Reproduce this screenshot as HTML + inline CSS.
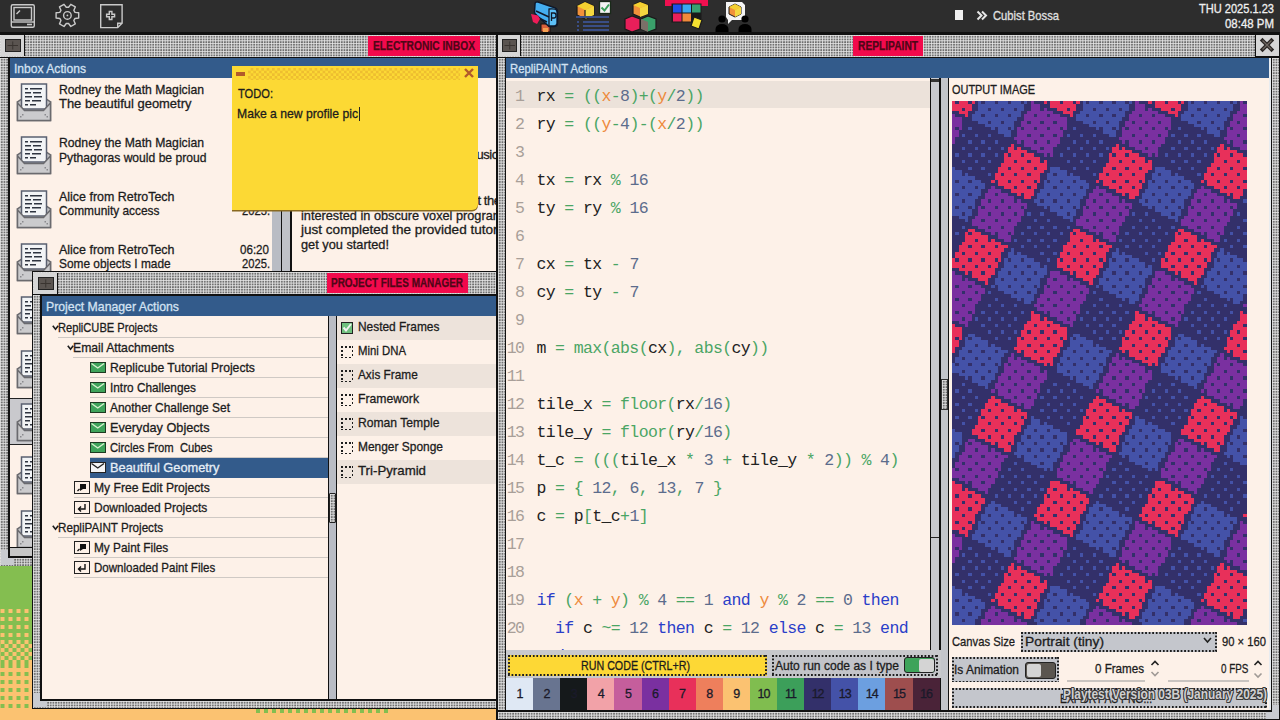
<!DOCTYPE html><html><head><meta charset="utf-8"><style>
*{margin:0;padding:0;box-sizing:border-box}
html,body{width:1280px;height:720px;overflow:hidden}
body{position:relative;background:#fbc271;font-family:"Liberation Sans",sans-serif;font-size:13px;color:#1c1c1c}
.a{position:absolute}
.t{white-space:nowrap;line-height:1;letter-spacing:-0.45px;-webkit-text-stroke:0.3px currentColor;transform-origin:0 0}
.chk{background-color:#b6b6b6;background-image:linear-gradient(90deg,rgba(255,255,255,.42) 1px,transparent 1px),linear-gradient(rgba(255,255,255,.42) 1px,transparent 1px),radial-gradient(circle at 70% 70%,#6e6e6e 0.7px,transparent 1px);background-size:2.6667px 2.6667px}
.blk{background:#111}
.blue{background:#335b8b}
.hdr{color:#d3e2f2}
.lbl{background:#f20a4c}
.lblt{color:#4e0616}
.mono{font-family:"Liberation Mono",monospace;font-size:16.5px;letter-spacing:-0.62px;line-height:1;white-space:nowrap}
.sep{background:#cfc9c4}
.dotb{background-image:linear-gradient(90deg,#1e1e1e 50%,transparent 0),linear-gradient(90deg,#1e1e1e 50%,transparent 0),linear-gradient(#1e1e1e 50%,transparent 0),linear-gradient(#1e1e1e 50%,transparent 0);background-size:3.555px 1.6px,3.555px 1.6px,1.6px 3.555px,1.6px 3.555px;background-position:0 0,0 100%,0 0,100% 0;background-repeat:repeat-x,repeat-x,repeat-y,repeat-y}
</style></head><body>
<div class="a " style="left:0px;top:560px;width:40px;height:50px;background:#84be50"></div>
<div class="a " style="left:0px;top:607px;width:40px;height:33px;background-color:#84be50;background-image:conic-gradient(#fbc271 25%,transparent 0);background-size:8px 8px;background-position:-3.5px 2px"></div>
<div class="a " style="left:0px;top:640px;width:40px;height:24px;background-color:#84be50;background-image:conic-gradient(#fbc271 25%,transparent 0 50%,#fbc271 0 75%,transparent 0);background-size:8px 8px;background-position:-3.5px 0"></div>
<div class="a " style="left:0px;top:664px;width:40px;height:44px;background-color:#fbc271;background-image:conic-gradient(#84be50 25%,transparent 0);background-size:8px 8px;background-position:-3.5px 0"></div>
<div class="a " style="left:252px;top:708.5px;width:136px;height:4px;background-image:conic-gradient(#84be50 25%,transparent 0);background-size:8px 8px;background-position:0 0"></div>
<div class="a blk" style="left:0px;top:32px;width:497px;height:534px;"></div>
<div class="a chk" style="left:0px;top:34.5px;width:496px;height:22px;"></div>
<div class="a " style="left:1px;top:35px;width:23.5px;height:21px;background:#d6d6d6;border-right:1.2px solid #111"></div>
<div class="a " style="left:5px;top:39px;width:15.5px;height:13px;background:#5a5450;border:1.5px solid #222"></div>
<svg class="a" style="left:5px;top:39px;" width="15.5" height="13"><path d="M7.75 2.5v8 M2.5 6.5h10.5" stroke="#3a3430" stroke-width="1"/></svg>
<div class="a lbl" style="left:368px;top:36px;width:112px;height:20px;"></div>
<div class="a t lblt" style="left:373.0px;top:39.0px;font-size:13.5px;letter-spacing:0px;font-weight:bold;transform:scaleX(0.7598);-webkit-text-stroke:0.25px currentColor">ELECTRONIC INBOX</div>
<div class="a chk" style="left:0px;top:58.4px;width:8px;height:508px;"></div>
<div class="a blue" style="left:9.5px;top:58.4px;width:487px;height:20px;"></div>
<div class="a t hdr" style="left:14px;top:62.0px;font-size:13px;letter-spacing:0px;transform:scaleX(0.9309);">Inbox Actions</div>
<div class="a" style="left:9.5px;top:78.4px;width:262px;height:468.3px;overflow:hidden;background:#fdf1e8">
<svg class="a" style="left:6.5px;top:3.5999999999999943px;" width="38" height="40"><path d="M1.5 38.5 V20 L8 15.5 H28 L34.5 20 V38.5z" fill="#c2c2c4" stroke="#6a6a6e" stroke-width="1.5"/>
<rect x="5.5" y="2" width="25" height="25" fill="#f2f4f6" stroke="#5a6070" stroke-width="1.5"/>
<g fill="#2e3440"><rect x="9" y="6" width="3" height="1.5"/><rect x="14" y="6" width="12" height="1.5"/><rect x="9" y="10" width="6" height="1.5"/><rect x="17" y="10" width="8" height="1.5"/><rect x="9" y="14" width="7" height="1.5"/><rect x="18" y="14" width="8" height="1.5"/><rect x="9" y="18" width="5" height="1.5"/><rect x="16" y="18" width="9" height="1.5"/><rect x="9" y="22" width="3" height="1.5"/><rect x="14" y="22" width="6" height="1.5"/></g>
<path d="M1.5 21 L8.5 28.5 H27.5 L34.5 21 V38.5 H1.5z" fill="#cbcbcd" stroke="#6a6a6e" stroke-width="1.5"/>
<g fill="#8a8a8e"><rect x="4" y="34" width="1.5" height="1.5"/><rect x="6" y="32" width="1.5" height="1.5"/><rect x="30.5" y="34" width="1.5" height="1.5"/><rect x="28.5" y="32" width="1.5" height="1.5"/></g></svg>
<div class="a t " style="left:49.5px;top:4.599999999999994px;font-size:13px;letter-spacing:0px;transform:scaleX(0.9374);">Rodney the Math Magician</div>
<div class="a t " style="left:49.5px;top:18.849999999999994px;font-size:13px;letter-spacing:0px;transform:scaleX(0.9962);">The beautiful geometry</div>
<svg class="a" style="left:6.5px;top:56.92999999999998px;" width="38" height="40"><path d="M1.5 38.5 V20 L8 15.5 H28 L34.5 20 V38.5z" fill="#c2c2c4" stroke="#6a6a6e" stroke-width="1.5"/>
<rect x="5.5" y="2" width="25" height="25" fill="#f2f4f6" stroke="#5a6070" stroke-width="1.5"/>
<g fill="#2e3440"><rect x="9" y="6" width="3" height="1.5"/><rect x="14" y="6" width="12" height="1.5"/><rect x="9" y="10" width="6" height="1.5"/><rect x="17" y="10" width="8" height="1.5"/><rect x="9" y="14" width="7" height="1.5"/><rect x="18" y="14" width="8" height="1.5"/><rect x="9" y="18" width="5" height="1.5"/><rect x="16" y="18" width="9" height="1.5"/><rect x="9" y="22" width="3" height="1.5"/><rect x="14" y="22" width="6" height="1.5"/></g>
<path d="M1.5 21 L8.5 28.5 H27.5 L34.5 21 V38.5 H1.5z" fill="#cbcbcd" stroke="#6a6a6e" stroke-width="1.5"/>
<g fill="#8a8a8e"><rect x="4" y="34" width="1.5" height="1.5"/><rect x="6" y="32" width="1.5" height="1.5"/><rect x="30.5" y="34" width="1.5" height="1.5"/><rect x="28.5" y="32" width="1.5" height="1.5"/></g></svg>
<div class="a t " style="left:49.5px;top:57.92999999999998px;font-size:13px;letter-spacing:0px;transform:scaleX(0.9374);">Rodney the Math Magician</div>
<div class="a t " style="left:49.5px;top:72.17999999999998px;font-size:13px;letter-spacing:0px;transform:scaleX(0.9316);">Pythagoras would be proud</div>
<svg class="a" style="left:6.5px;top:110.25999999999999px;" width="38" height="40"><path d="M1.5 38.5 V20 L8 15.5 H28 L34.5 20 V38.5z" fill="#c2c2c4" stroke="#6a6a6e" stroke-width="1.5"/>
<rect x="5.5" y="2" width="25" height="25" fill="#f2f4f6" stroke="#5a6070" stroke-width="1.5"/>
<g fill="#2e3440"><rect x="9" y="6" width="3" height="1.5"/><rect x="14" y="6" width="12" height="1.5"/><rect x="9" y="10" width="6" height="1.5"/><rect x="17" y="10" width="8" height="1.5"/><rect x="9" y="14" width="7" height="1.5"/><rect x="18" y="14" width="8" height="1.5"/><rect x="9" y="18" width="5" height="1.5"/><rect x="16" y="18" width="9" height="1.5"/><rect x="9" y="22" width="3" height="1.5"/><rect x="14" y="22" width="6" height="1.5"/></g>
<path d="M1.5 21 L8.5 28.5 H27.5 L34.5 21 V38.5 H1.5z" fill="#cbcbcd" stroke="#6a6a6e" stroke-width="1.5"/>
<g fill="#8a8a8e"><rect x="4" y="34" width="1.5" height="1.5"/><rect x="6" y="32" width="1.5" height="1.5"/><rect x="30.5" y="34" width="1.5" height="1.5"/><rect x="28.5" y="32" width="1.5" height="1.5"/></g></svg>
<div class="a t " style="left:49.5px;top:111.25999999999999px;font-size:13px;letter-spacing:0px;transform:scaleX(0.9571);">Alice from RetroTech</div>
<div class="a t " style="left:49.5px;top:125.50999999999999px;font-size:13px;letter-spacing:0px;transform:scaleX(0.9151);">Community access</div>
<div class="a t " style="left:232.5px;top:125.50999999999999px;font-size:13px;letter-spacing:0px;transform:scaleX(0.8603);">2025.</div>
<svg class="a" style="left:6.5px;top:163.59px;" width="38" height="40"><path d="M1.5 38.5 V20 L8 15.5 H28 L34.5 20 V38.5z" fill="#c2c2c4" stroke="#6a6a6e" stroke-width="1.5"/>
<rect x="5.5" y="2" width="25" height="25" fill="#f2f4f6" stroke="#5a6070" stroke-width="1.5"/>
<g fill="#2e3440"><rect x="9" y="6" width="3" height="1.5"/><rect x="14" y="6" width="12" height="1.5"/><rect x="9" y="10" width="6" height="1.5"/><rect x="17" y="10" width="8" height="1.5"/><rect x="9" y="14" width="7" height="1.5"/><rect x="18" y="14" width="8" height="1.5"/><rect x="9" y="18" width="5" height="1.5"/><rect x="16" y="18" width="9" height="1.5"/><rect x="9" y="22" width="3" height="1.5"/><rect x="14" y="22" width="6" height="1.5"/></g>
<path d="M1.5 21 L8.5 28.5 H27.5 L34.5 21 V38.5 H1.5z" fill="#cbcbcd" stroke="#6a6a6e" stroke-width="1.5"/>
<g fill="#8a8a8e"><rect x="4" y="34" width="1.5" height="1.5"/><rect x="6" y="32" width="1.5" height="1.5"/><rect x="30.5" y="34" width="1.5" height="1.5"/><rect x="28.5" y="32" width="1.5" height="1.5"/></g></svg>
<div class="a t " style="left:49.5px;top:164.59px;font-size:13px;letter-spacing:0px;transform:scaleX(0.9571);">Alice from RetroTech</div>
<div class="a t " style="left:49.5px;top:178.84px;font-size:13px;letter-spacing:0px;transform:scaleX(0.9145);">Some objects I made</div>
<div class="a t " style="left:230px;top:164.59px;font-size:13px;letter-spacing:0px;transform:scaleX(0.8910);">06:20</div>
<div class="a t " style="left:232.5px;top:178.84px;font-size:13px;letter-spacing:0px;transform:scaleX(0.8603);">2025.</div>
<svg class="a" style="left:6.5px;top:216.92px;" width="38" height="40"><path d="M1.5 38.5 V20 L8 15.5 H28 L34.5 20 V38.5z" fill="#c2c2c4" stroke="#6a6a6e" stroke-width="1.5"/>
<rect x="5.5" y="2" width="25" height="25" fill="#f2f4f6" stroke="#5a6070" stroke-width="1.5"/>
<g fill="#2e3440"><rect x="9" y="6" width="3" height="1.5"/><rect x="14" y="6" width="12" height="1.5"/><rect x="9" y="10" width="6" height="1.5"/><rect x="17" y="10" width="8" height="1.5"/><rect x="9" y="14" width="7" height="1.5"/><rect x="18" y="14" width="8" height="1.5"/><rect x="9" y="18" width="5" height="1.5"/><rect x="16" y="18" width="9" height="1.5"/><rect x="9" y="22" width="3" height="1.5"/><rect x="14" y="22" width="6" height="1.5"/></g>
<path d="M1.5 21 L8.5 28.5 H27.5 L34.5 21 V38.5 H1.5z" fill="#cbcbcd" stroke="#6a6a6e" stroke-width="1.5"/>
<g fill="#8a8a8e"><rect x="4" y="34" width="1.5" height="1.5"/><rect x="6" y="32" width="1.5" height="1.5"/><rect x="30.5" y="34" width="1.5" height="1.5"/><rect x="28.5" y="32" width="1.5" height="1.5"/></g></svg>
<svg class="a" style="left:6.5px;top:270.25px;" width="38" height="40"><path d="M1.5 38.5 V20 L8 15.5 H28 L34.5 20 V38.5z" fill="#c2c2c4" stroke="#6a6a6e" stroke-width="1.5"/>
<rect x="5.5" y="2" width="25" height="25" fill="#f2f4f6" stroke="#5a6070" stroke-width="1.5"/>
<g fill="#2e3440"><rect x="9" y="6" width="3" height="1.5"/><rect x="14" y="6" width="12" height="1.5"/><rect x="9" y="10" width="6" height="1.5"/><rect x="17" y="10" width="8" height="1.5"/><rect x="9" y="14" width="7" height="1.5"/><rect x="18" y="14" width="8" height="1.5"/><rect x="9" y="18" width="5" height="1.5"/><rect x="16" y="18" width="9" height="1.5"/><rect x="9" y="22" width="3" height="1.5"/><rect x="14" y="22" width="6" height="1.5"/></g>
<path d="M1.5 21 L8.5 28.5 H27.5 L34.5 21 V38.5 H1.5z" fill="#cbcbcd" stroke="#6a6a6e" stroke-width="1.5"/>
<g fill="#8a8a8e"><rect x="4" y="34" width="1.5" height="1.5"/><rect x="6" y="32" width="1.5" height="1.5"/><rect x="30.5" y="34" width="1.5" height="1.5"/><rect x="28.5" y="32" width="1.5" height="1.5"/></g></svg>
<div class="a " style="left:0px;top:319.58000000000004px;width:262px;height:47px;background:#c9c9cd;border-top:1.5px solid #222;border-bottom:1.5px solid #222"></div>
<svg class="a" style="left:6.5px;top:323.58000000000004px;" width="38" height="40"><path d="M1.5 38.5 V20 L8 15.5 H28 L34.5 20 V38.5z" fill="#c2c2c4" stroke="#6a6a6e" stroke-width="1.5"/>
<rect x="5.5" y="2" width="25" height="25" fill="#f2f4f6" stroke="#5a6070" stroke-width="1.5"/>
<g fill="#2e3440"><rect x="9" y="6" width="3" height="1.5"/><rect x="14" y="6" width="12" height="1.5"/><rect x="9" y="10" width="6" height="1.5"/><rect x="17" y="10" width="8" height="1.5"/><rect x="9" y="14" width="7" height="1.5"/><rect x="18" y="14" width="8" height="1.5"/><rect x="9" y="18" width="5" height="1.5"/><rect x="16" y="18" width="9" height="1.5"/><rect x="9" y="22" width="3" height="1.5"/><rect x="14" y="22" width="6" height="1.5"/></g>
<path d="M1.5 21 L8.5 28.5 H27.5 L34.5 21 V38.5 H1.5z" fill="#cbcbcd" stroke="#6a6a6e" stroke-width="1.5"/>
<g fill="#8a8a8e"><rect x="4" y="34" width="1.5" height="1.5"/><rect x="6" y="32" width="1.5" height="1.5"/><rect x="30.5" y="34" width="1.5" height="1.5"/><rect x="28.5" y="32" width="1.5" height="1.5"/></g></svg>
<svg class="a" style="left:6.5px;top:376.90999999999997px;" width="38" height="40"><path d="M1.5 38.5 V20 L8 15.5 H28 L34.5 20 V38.5z" fill="#c2c2c4" stroke="#6a6a6e" stroke-width="1.5"/>
<rect x="5.5" y="2" width="25" height="25" fill="#f2f4f6" stroke="#5a6070" stroke-width="1.5"/>
<g fill="#2e3440"><rect x="9" y="6" width="3" height="1.5"/><rect x="14" y="6" width="12" height="1.5"/><rect x="9" y="10" width="6" height="1.5"/><rect x="17" y="10" width="8" height="1.5"/><rect x="9" y="14" width="7" height="1.5"/><rect x="18" y="14" width="8" height="1.5"/><rect x="9" y="18" width="5" height="1.5"/><rect x="16" y="18" width="9" height="1.5"/><rect x="9" y="22" width="3" height="1.5"/><rect x="14" y="22" width="6" height="1.5"/></g>
<path d="M1.5 21 L8.5 28.5 H27.5 L34.5 21 V38.5 H1.5z" fill="#cbcbcd" stroke="#6a6a6e" stroke-width="1.5"/>
<g fill="#8a8a8e"><rect x="4" y="34" width="1.5" height="1.5"/><rect x="6" y="32" width="1.5" height="1.5"/><rect x="30.5" y="34" width="1.5" height="1.5"/><rect x="28.5" y="32" width="1.5" height="1.5"/></g></svg>
<svg class="a" style="left:6.5px;top:430.24px;" width="38" height="40"><path d="M1.5 38.5 V20 L8 15.5 H28 L34.5 20 V38.5z" fill="#c2c2c4" stroke="#6a6a6e" stroke-width="1.5"/>
<rect x="5.5" y="2" width="25" height="25" fill="#f2f4f6" stroke="#5a6070" stroke-width="1.5"/>
<g fill="#2e3440"><rect x="9" y="6" width="3" height="1.5"/><rect x="14" y="6" width="12" height="1.5"/><rect x="9" y="10" width="6" height="1.5"/><rect x="17" y="10" width="8" height="1.5"/><rect x="9" y="14" width="7" height="1.5"/><rect x="18" y="14" width="8" height="1.5"/><rect x="9" y="18" width="5" height="1.5"/><rect x="16" y="18" width="9" height="1.5"/><rect x="9" y="22" width="3" height="1.5"/><rect x="14" y="22" width="6" height="1.5"/></g>
<path d="M1.5 21 L8.5 28.5 H27.5 L34.5 21 V38.5 H1.5z" fill="#cbcbcd" stroke="#6a6a6e" stroke-width="1.5"/>
<g fill="#8a8a8e"><rect x="4" y="34" width="1.5" height="1.5"/><rect x="6" y="32" width="1.5" height="1.5"/><rect x="30.5" y="34" width="1.5" height="1.5"/><rect x="28.5" y="32" width="1.5" height="1.5"/></g></svg>
</div>
<div class="a " style="left:271.5px;top:78.4px;width:9.5px;height:468.3px;background:#b9bcc4"></div>
<div class="a blk" style="left:280.5px;top:78.4px;width:1.5px;height:468.3px;"></div>
<div class="a " style="left:282px;top:78.4px;width:8px;height:468.3px;background:#bfc1c7"></div>
<div class="a blk" style="left:290px;top:78.4px;width:1.5px;height:468.3px;"></div>
<div class="a" style="left:291.5px;top:78.4px;width:205px;height:468.3px;overflow:hidden;background:#fdf1e8">
<div class="a t " style="left:185px;top:70.0px;">usic</div>
<div class="a t " style="left:186px;top:116.0px;">t the</div>
<div class="a t " style="left:9.5px;top:130.5px;font-size:13px;letter-spacing:0px;transform:scaleX(0.9791);">interested in obscure voxel programming</div>
<div class="a t " style="left:9.5px;top:145.0px;font-size:13px;letter-spacing:0px;transform:scaleX(1.0421);">just completed the provided tutorials to</div>
<div class="a t " style="left:9.5px;top:159.5px;font-size:13px;letter-spacing:0px;transform:scaleX(0.9819);">get you started!</div>
</div>
<div class="a " style="left:9.5px;top:548px;width:487px;height:8px;background:#c6c6c6"></div>
<div class="a chk" style="left:0px;top:557.5px;width:496px;height:8px;"></div>
<div class="a " style="left:1px;top:550px;width:7px;height:15px;background:#c9cbd0"></div>
<div class="a " style="left:1px;top:557.5px;width:13px;height:7.5px;background:#c9cbd0"></div>
<div class="a blk" style="left:32px;top:271px;width:466px;height:438px;"></div>
<div class="a chk" style="left:33px;top:272px;width:464px;height:21.5px;"></div>
<div class="a " style="left:34px;top:273px;width:23.5px;height:21px;background:#d6d6d6;border-right:1.2px solid #111"></div>
<div class="a " style="left:38px;top:277px;width:15.5px;height:13px;background:#5a5450;border:1.5px solid #222"></div>
<svg class="a" style="left:38px;top:277px;" width="15.5" height="13"><path d="M7.75 2.5v8 M2.5 6.5h10.5" stroke="#3a3430" stroke-width="1"/></svg>
<div class="a lbl" style="left:326.7px;top:273px;width:141px;height:20px;"></div>
<div class="a t lblt" style="left:331.2px;top:276.0px;font-size:13.5px;letter-spacing:0px;font-weight:bold;transform:scaleX(0.7363);-webkit-text-stroke:0.25px currentColor">PROJECT FILES MANAGER</div>
<div class="a chk" style="left:33px;top:295px;width:7px;height:405px;"></div>
<div class="a blue" style="left:41.5px;top:295.5px;width:456px;height:20.5px;"></div>
<div class="a t hdr" style="left:46px;top:300.0px;font-size:13px;letter-spacing:0px;transform:scaleX(0.9437);">Project Manager Actions</div>
<div class="a" style="left:41.5px;top:316px;width:286px;height:382.75px;overflow:hidden;background:#fdf1e8">
<svg class="a" style="left:10.5px;top:9px;" width="7" height="6"><path d="M0.8 0.8 L3.5 4.2 L6.2 0.8" fill="none" stroke="#1c1c1c" stroke-width="1.6"/></svg>
<div class="a t " style="left:16.5px;top:5.0px;font-size:13px;letter-spacing:0px;transform:scaleX(0.8552);">RepliCUBE Projects</div>
<div class="a sep" style="left:16.5px;top:20.5px;width:269.5px;height:1.5px;"></div>
<svg class="a" style="left:25.5px;top:29px;" width="7" height="6"><path d="M0.8 0.8 L3.5 4.2 L6.2 0.8" fill="none" stroke="#1c1c1c" stroke-width="1.6"/></svg>
<div class="a t " style="left:31.5px;top:25.0px;font-size:13px;letter-spacing:0px;transform:scaleX(0.9380);">Email Attachments</div>
<div class="a sep" style="left:31.5px;top:40.5px;width:254.5px;height:1.5px;"></div>
<div class="a " style="left:48.5px;top:46px;width:15.5px;height:10.5px;background:#3ea35a;border:1.5px solid #1e3a22"></div>
<svg class="a" style="left:48.5px;top:46px;" width="16" height="10"><path d="M1.5 1.5 L7.75 6 L14 1.5" fill="none" stroke="#d8f0d0" stroke-width="1.4"/></svg>
<div class="a t " style="left:68.5px;top:45.0px;font-size:13px;letter-spacing:0px;transform:scaleX(0.9375);">Replicube Tutorial Projects</div>
<div class="a sep" style="left:48.5px;top:60.5px;width:237.5px;height:1.5px;"></div>
<div class="a " style="left:48.5px;top:66px;width:15.5px;height:10.5px;background:#3ea35a;border:1.5px solid #1e3a22"></div>
<svg class="a" style="left:48.5px;top:66px;" width="16" height="10"><path d="M1.5 1.5 L7.75 6 L14 1.5" fill="none" stroke="#d8f0d0" stroke-width="1.4"/></svg>
<div class="a t " style="left:68.5px;top:65.0px;font-size:13px;letter-spacing:0px;transform:scaleX(0.9081);">Intro Challenges</div>
<div class="a sep" style="left:48.5px;top:80.5px;width:237.5px;height:1.5px;"></div>
<div class="a " style="left:48.5px;top:86px;width:15.5px;height:10.5px;background:#3ea35a;border:1.5px solid #1e3a22"></div>
<svg class="a" style="left:48.5px;top:86px;" width="16" height="10"><path d="M1.5 1.5 L7.75 6 L14 1.5" fill="none" stroke="#d8f0d0" stroke-width="1.4"/></svg>
<div class="a t " style="left:68.5px;top:85.0px;font-size:13px;letter-spacing:0px;transform:scaleX(0.9170);">Another Challenge Set</div>
<div class="a sep" style="left:48.5px;top:100.5px;width:237.5px;height:1.5px;"></div>
<div class="a " style="left:48.5px;top:106px;width:15.5px;height:10.5px;background:#3ea35a;border:1.5px solid #1e3a22"></div>
<svg class="a" style="left:48.5px;top:106px;" width="16" height="10"><path d="M1.5 1.5 L7.75 6 L14 1.5" fill="none" stroke="#d8f0d0" stroke-width="1.4"/></svg>
<div class="a t " style="left:68.5px;top:105.0px;font-size:13px;letter-spacing:0px;transform:scaleX(0.9765);">Everyday Objects</div>
<div class="a sep" style="left:48.5px;top:120.5px;width:237.5px;height:1.5px;"></div>
<div class="a " style="left:48.5px;top:126px;width:15.5px;height:10.5px;background:#3ea35a;border:1.5px solid #1e3a22"></div>
<svg class="a" style="left:48.5px;top:126px;" width="16" height="10"><path d="M1.5 1.5 L7.75 6 L14 1.5" fill="none" stroke="#d8f0d0" stroke-width="1.4"/></svg>
<div class="a t " style="left:68.5px;top:125.0px;font-size:13px;letter-spacing:0px;transform:scaleX(0.8651);">Circles From &nbsp;Cubes</div>
<div class="a sep" style="left:48.5px;top:140.5px;width:237.5px;height:1.5px;"></div>
<div class="a " style="left:48.5px;top:142px;width:290px;height:19.5px;background:#335b8b"></div>
<div class="a " style="left:48.5px;top:146px;width:15.5px;height:10.5px;background:#f4f4f4;border:1.5px solid #222"></div>
<svg class="a" style="left:48.5px;top:146px;" width="16" height="10"><path d="M1.5 1.5 L7.75 6 L14 1.5" fill="none" stroke="#222" stroke-width="1.4"/></svg>
<div class="a t " style="left:68.5px;top:145.0px;font-size:13px;letter-spacing:0px;transform:scaleX(0.9839);color:#e6eef6">Beautiful Geometry</div>
<div class="a " style="left:32.5px;top:165px;width:15.5px;height:13px;background:#fdf1e8;border:1.5px solid #222"></div>
<svg class="a" style="left:32.5px;top:165px;" width="16" height="13"><path d="M6 3 h6 v5 h-3 l-3 2z" fill="#111"/><path d="M3.5 10 l2-2" stroke="#111" stroke-width="1.3"/></svg>
<div class="a t " style="left:52.5px;top:165.0px;font-size:13px;letter-spacing:0px;transform:scaleX(0.9315);">My Free Edit Projects</div>
<div class="a sep" style="left:32.5px;top:180.5px;width:253.5px;height:1.5px;"></div>
<div class="a " style="left:32.5px;top:185px;width:15.5px;height:13px;background:#fdf1e8;border:1.5px solid #222"></div>
<svg class="a" style="left:32.5px;top:185px;" width="16" height="13"><path d="M11 3 v5 h-6 M7 5.5 l-2.5 2.5 l2.5 2.5" fill="none" stroke="#111" stroke-width="1.4"/></svg>
<div class="a t " style="left:52.5px;top:185.0px;font-size:13px;letter-spacing:0px;transform:scaleX(0.9216);">Downloaded Projects</div>
<div class="a sep" style="left:32.5px;top:200.5px;width:253.5px;height:1.5px;"></div>
<svg class="a" style="left:10.5px;top:209px;" width="7" height="6"><path d="M0.8 0.8 L3.5 4.2 L6.2 0.8" fill="none" stroke="#1c1c1c" stroke-width="1.6"/></svg>
<div class="a t " style="left:16.5px;top:205.0px;font-size:13px;letter-spacing:0px;transform:scaleX(0.8952);">RepliPAINT Projects</div>
<div class="a sep" style="left:16.5px;top:220.5px;width:269.5px;height:1.5px;"></div>
<div class="a " style="left:32.5px;top:225px;width:15.5px;height:13px;background:#fdf1e8;border:1.5px solid #222"></div>
<svg class="a" style="left:32.5px;top:225px;" width="16" height="13"><path d="M6 3 h6 v5 h-3 l-3 2z" fill="#111"/><path d="M3.5 10 l2-2" stroke="#111" stroke-width="1.3"/></svg>
<div class="a t " style="left:52.5px;top:225.0px;font-size:13px;letter-spacing:0px;transform:scaleX(0.9095);">My Paint Files</div>
<div class="a sep" style="left:32.5px;top:240.5px;width:253.5px;height:1.5px;"></div>
<div class="a " style="left:32.5px;top:245px;width:15.5px;height:13px;background:#fdf1e8;border:1.5px solid #222"></div>
<svg class="a" style="left:32.5px;top:245px;" width="16" height="13"><path d="M11 3 v5 h-6 M7 5.5 l-2.5 2.5 l2.5 2.5" fill="none" stroke="#111" stroke-width="1.4"/></svg>
<div class="a t " style="left:52.5px;top:245.0px;font-size:13px;letter-spacing:0px;transform:scaleX(0.8875);">Downloaded Paint Files</div>
<div class="a sep" style="left:32.5px;top:260.5px;width:253.5px;height:1.5px;"></div>
</div>
<div class="a blk" style="left:327.5px;top:316px;width:9px;height:382.75px;"></div>
<div class="a " style="left:329px;top:316px;width:6.5px;height:382.75px;background:#b9bcc4"></div>
<div class="a chk" style="left:329px;top:492.5px;width:6.5px;height:30.5px;border:1px solid #222;border-radius:1px"></div>
<div class="a" style="left:336.5px;top:316px;width:160px;height:382.75px;overflow:hidden;background:#fdf1e8">
<div class="a " style="left:0px;top:0px;width:160px;height:24px;background:#ede3db"></div>
<div class="a " style="left:4.5px;top:6px;width:12px;height:12px;background:#6fc07e;border:1.5px solid #222"></div>
<svg class="a" style="left:4.5px;top:6px;" width="12" height="12"><path d="M2.5 5.5 L5 8.5 L10 2" fill="none" stroke="#f2f2f2" stroke-width="2"/></svg>
<div class="a t " style="left:21.5px;top:4.0px;font-size:13px;letter-spacing:0px;transform:scaleX(0.9159);">Nested Frames</div>
<div class="a dotb" style="left:4.5px;top:30px;width:12px;height:12px;background-size:4px 1.5px,4px 1.5px,1.5px 4px,1.5px 4px"></div>
<div class="a t " style="left:21.5px;top:28.0px;font-size:13px;letter-spacing:0px;transform:scaleX(0.8742);">Mini DNA</div>
<div class="a " style="left:0px;top:48px;width:160px;height:24px;background:#ede3db"></div>
<div class="a dotb" style="left:4.5px;top:54px;width:12px;height:12px;background-size:4px 1.5px,4px 1.5px,1.5px 4px,1.5px 4px"></div>
<div class="a t " style="left:21.5px;top:52.0px;font-size:13px;letter-spacing:0px;transform:scaleX(0.9082);">Axis Frame</div>
<div class="a dotb" style="left:4.5px;top:78px;width:12px;height:12px;background-size:4px 1.5px,4px 1.5px,1.5px 4px,1.5px 4px"></div>
<div class="a t " style="left:21.5px;top:76.0px;font-size:13px;letter-spacing:0px;transform:scaleX(0.9382);">Framework</div>
<div class="a " style="left:0px;top:96px;width:160px;height:24px;background:#ede3db"></div>
<div class="a dotb" style="left:4.5px;top:102px;width:12px;height:12px;background-size:4px 1.5px,4px 1.5px,1.5px 4px,1.5px 4px"></div>
<div class="a t " style="left:21.5px;top:100.0px;font-size:13px;letter-spacing:0px;transform:scaleX(0.9333);">Roman Temple</div>
<div class="a dotb" style="left:4.5px;top:126px;width:12px;height:12px;background-size:4px 1.5px,4px 1.5px,1.5px 4px,1.5px 4px"></div>
<div class="a t " style="left:21.5px;top:124.0px;font-size:13px;letter-spacing:0px;transform:scaleX(0.9185);">Menger Sponge</div>
<div class="a " style="left:0px;top:144px;width:160px;height:24px;background:#ede3db"></div>
<div class="a dotb" style="left:4.5px;top:150px;width:12px;height:12px;background-size:4px 1.5px,4px 1.5px,1.5px 4px,1.5px 4px"></div>
<div class="a t " style="left:21.5px;top:148.0px;font-size:13px;letter-spacing:0px;transform:scaleX(1.0197);">Tri-Pyramid</div>
</div>
<div class="a blk" style="left:33px;top:699px;width:464px;height:1.5px;"></div>
<div class="a chk" style="left:33px;top:700.5px;width:464px;height:7px;"></div>
<div class="a " style="left:33px;top:693px;width:7px;height:14px;background:#c9cbd0"></div>
<div class="a " style="left:33px;top:700.5px;width:14px;height:6.5px;background:#c9cbd0"></div>
<div class="a blk" style="left:496px;top:32px;width:784px;height:688px;"></div>
<div class="a chk" style="left:498px;top:34.5px;width:758px;height:22px;"></div>
<div class="a " style="left:497.5px;top:35px;width:23.5px;height:21px;background:#d6d6d6;border-right:1.2px solid #111"></div>
<div class="a " style="left:501.5px;top:39px;width:15.5px;height:13px;background:#5a5450;border:1.5px solid #222"></div>
<svg class="a" style="left:501.5px;top:39px;" width="15.5" height="13"><path d="M7.75 2.5v8 M2.5 6.5h10.5" stroke="#3a3430" stroke-width="1"/></svg>
<div class="a lbl" style="left:853px;top:36px;width:70px;height:20px;"></div>
<div class="a t lblt" style="left:858.0px;top:39.0px;font-size:13.5px;letter-spacing:0px;font-weight:bold;transform:scaleX(0.7571);-webkit-text-stroke:0.25px currentColor">REPLIPAINT</div>
<div class="a blk" style="left:1254.8px;top:34.5px;width:1.4px;height:22px;"></div>
<div class="a " style="left:1256px;top:35px;width:22.5px;height:21px;background:#d6d6d6"></div>
<svg class="a" style="left:1258px;top:37px;" width="18" height="17"><path d="M4.5 3.5 L13.5 12.5 M13.5 3.5 L4.5 12.5" stroke="#2a2624" stroke-width="3.8" stroke-linecap="square"/><path d="M4.5 3.5 L13.5 12.5 M13.5 3.5 L4.5 12.5" stroke="#6e6660" stroke-width="1.3"/></svg>
<div class="a chk" style="left:497.5px;top:58.4px;width:7px;height:652px;"></div>
<div class="a blue" style="left:505.5px;top:58.4px;width:763.5px;height:20px;"></div>
<div class="a t hdr" style="left:510px;top:62.0px;font-size:13px;letter-spacing:0px;transform:scaleX(0.8686);">RepliPAINT Actions</div>
<div class="a " style="left:1269px;top:58.4px;width:2px;height:652px;background:#e8ecf0"></div>
<div class="a chk" style="left:1272px;top:58.4px;width:7px;height:654px;"></div>
<div class="a" style="left:505.5px;top:78.4px;width:424px;height:571.6px;overflow:hidden;background:#fdf1e8">
<div class="a " style="left:0px;top:2.5px;width:424px;height:27.5px;background:#ece2da"></div>
<div class="a mono" style="left:-2px;top:11.099999999999994px;width:20px;text-align:right;color:#a89f98;letter-spacing:-1.5px">1</div>
<div class="a mono" style="left:31px;top:11.099999999999994px"><span style="color:#222">rx</span><span style="color:#4aa564">&nbsp;=&nbsp;</span><span style="color:#4aa564">((</span><span style="color:#ee8a3c">x</span><span style="color:#4aa564">-</span><span style="color:#5c6c8c">8</span><span style="color:#4aa564">)+(</span><span style="color:#ee8a3c">y</span><span style="color:#4aa564">/</span><span style="color:#5c6c8c">2</span><span style="color:#4aa564">))</span></div>
<div class="a mono" style="left:-2px;top:39.099999999999994px;width:20px;text-align:right;color:#a89f98;letter-spacing:-1.5px">2</div>
<div class="a mono" style="left:31px;top:39.099999999999994px"><span style="color:#222">ry</span><span style="color:#4aa564">&nbsp;=&nbsp;</span><span style="color:#4aa564">((</span><span style="color:#ee8a3c">y</span><span style="color:#4aa564">-</span><span style="color:#5c6c8c">4</span><span style="color:#4aa564">)-(</span><span style="color:#ee8a3c">x</span><span style="color:#4aa564">/</span><span style="color:#5c6c8c">2</span><span style="color:#4aa564">))</span></div>
<div class="a mono" style="left:-2px;top:67.1px;width:20px;text-align:right;color:#a89f98;letter-spacing:-1.5px">3</div>
<div class="a mono" style="left:31px;top:67.1px"></div>
<div class="a mono" style="left:-2px;top:95.1px;width:20px;text-align:right;color:#a89f98;letter-spacing:-1.5px">4</div>
<div class="a mono" style="left:31px;top:95.1px"><span style="color:#222">tx</span><span style="color:#4aa564">&nbsp;=&nbsp;</span><span style="color:#222">rx</span><span style="color:#4aa564">&nbsp;%&nbsp;</span><span style="color:#5c6c8c">16</span></div>
<div class="a mono" style="left:-2px;top:123.1px;width:20px;text-align:right;color:#a89f98;letter-spacing:-1.5px">5</div>
<div class="a mono" style="left:31px;top:123.1px"><span style="color:#222">ty</span><span style="color:#4aa564">&nbsp;=&nbsp;</span><span style="color:#222">ry</span><span style="color:#4aa564">&nbsp;%&nbsp;</span><span style="color:#5c6c8c">16</span></div>
<div class="a mono" style="left:-2px;top:151.1px;width:20px;text-align:right;color:#a89f98;letter-spacing:-1.5px">6</div>
<div class="a mono" style="left:31px;top:151.1px"></div>
<div class="a mono" style="left:-2px;top:179.1px;width:20px;text-align:right;color:#a89f98;letter-spacing:-1.5px">7</div>
<div class="a mono" style="left:31px;top:179.1px"><span style="color:#222">cx</span><span style="color:#4aa564">&nbsp;=&nbsp;</span><span style="color:#222">tx</span><span style="color:#4aa564">&nbsp;-&nbsp;</span><span style="color:#5c6c8c">7</span></div>
<div class="a mono" style="left:-2px;top:207.1px;width:20px;text-align:right;color:#a89f98;letter-spacing:-1.5px">8</div>
<div class="a mono" style="left:31px;top:207.1px"><span style="color:#222">cy</span><span style="color:#4aa564">&nbsp;=&nbsp;</span><span style="color:#222">ty</span><span style="color:#4aa564">&nbsp;-&nbsp;</span><span style="color:#5c6c8c">7</span></div>
<div class="a mono" style="left:-2px;top:235.1px;width:20px;text-align:right;color:#a89f98;letter-spacing:-1.5px">9</div>
<div class="a mono" style="left:31px;top:235.1px"></div>
<div class="a mono" style="left:-2px;top:263.1px;width:20px;text-align:right;color:#a89f98;letter-spacing:-1.5px">10</div>
<div class="a mono" style="left:31px;top:263.1px"><span style="color:#222">m</span><span style="color:#4aa564">&nbsp;=&nbsp;</span><span style="color:#4aa564">max(abs(</span><span style="color:#222">cx</span><span style="color:#4aa564">),&nbsp;abs(</span><span style="color:#222">cy</span><span style="color:#4aa564">))</span></div>
<div class="a mono" style="left:-2px;top:291.1px;width:20px;text-align:right;color:#a89f98;letter-spacing:-1.5px">11</div>
<div class="a mono" style="left:31px;top:291.1px"></div>
<div class="a mono" style="left:-2px;top:319.1px;width:20px;text-align:right;color:#a89f98;letter-spacing:-1.5px">12</div>
<div class="a mono" style="left:31px;top:319.1px"><span style="color:#222">tile_x</span><span style="color:#4aa564">&nbsp;=&nbsp;</span><span style="color:#4aa564">floor(</span><span style="color:#222">rx</span><span style="color:#4aa564">/</span><span style="color:#5c6c8c">16</span><span style="color:#4aa564">)</span></div>
<div class="a mono" style="left:-2px;top:347.1px;width:20px;text-align:right;color:#a89f98;letter-spacing:-1.5px">13</div>
<div class="a mono" style="left:31px;top:347.1px"><span style="color:#222">tile_y</span><span style="color:#4aa564">&nbsp;=&nbsp;</span><span style="color:#4aa564">floor(</span><span style="color:#222">ry</span><span style="color:#4aa564">/</span><span style="color:#5c6c8c">16</span><span style="color:#4aa564">)</span></div>
<div class="a mono" style="left:-2px;top:375.1px;width:20px;text-align:right;color:#a89f98;letter-spacing:-1.5px">14</div>
<div class="a mono" style="left:31px;top:375.1px"><span style="color:#222">t_c</span><span style="color:#4aa564">&nbsp;=&nbsp;</span><span style="color:#4aa564">(((</span><span style="color:#222">tile_x</span><span style="color:#4aa564">&nbsp;*&nbsp;</span><span style="color:#5c6c8c">3</span><span style="color:#4aa564">&nbsp;+&nbsp;</span><span style="color:#222">tile_y</span><span style="color:#4aa564">&nbsp;*&nbsp;</span><span style="color:#5c6c8c">2</span><span style="color:#4aa564">))&nbsp;%&nbsp;</span><span style="color:#5c6c8c">4</span><span style="color:#4aa564">)</span></div>
<div class="a mono" style="left:-2px;top:403.1px;width:20px;text-align:right;color:#a89f98;letter-spacing:-1.5px">15</div>
<div class="a mono" style="left:31px;top:403.1px"><span style="color:#222">p</span><span style="color:#4aa564">&nbsp;=&nbsp;{&nbsp;</span><span style="color:#5c6c8c">12</span><span style="color:#4aa564">,&nbsp;</span><span style="color:#5c6c8c">6</span><span style="color:#4aa564">,&nbsp;</span><span style="color:#5c6c8c">13</span><span style="color:#4aa564">,&nbsp;</span><span style="color:#5c6c8c">7</span><span style="color:#4aa564">&nbsp;}</span></div>
<div class="a mono" style="left:-2px;top:431.1px;width:20px;text-align:right;color:#a89f98;letter-spacing:-1.5px">16</div>
<div class="a mono" style="left:31px;top:431.1px"><span style="color:#222">c</span><span style="color:#4aa564">&nbsp;=&nbsp;</span><span style="color:#222">p</span><span style="color:#4aa564">[</span><span style="color:#222">t_c</span><span style="color:#4aa564">+</span><span style="color:#5c6c8c">1</span><span style="color:#4aa564">]</span></div>
<div class="a mono" style="left:-2px;top:459.1px;width:20px;text-align:right;color:#a89f98;letter-spacing:-1.5px">17</div>
<div class="a mono" style="left:31px;top:459.1px"></div>
<div class="a mono" style="left:-2px;top:487.1px;width:20px;text-align:right;color:#a89f98;letter-spacing:-1.5px">18</div>
<div class="a mono" style="left:31px;top:487.1px"></div>
<div class="a mono" style="left:-2px;top:515.1px;width:20px;text-align:right;color:#a89f98;letter-spacing:-1.5px">19</div>
<div class="a mono" style="left:31px;top:515.1px"><span style="color:#2a3ec8">if</span><span style="color:#4aa564">&nbsp;(</span><span style="color:#ee8a3c">x</span><span style="color:#4aa564">&nbsp;+&nbsp;</span><span style="color:#ee8a3c">y</span><span style="color:#4aa564">)&nbsp;%&nbsp;</span><span style="color:#5c6c8c">4</span><span style="color:#4aa564">&nbsp;==&nbsp;</span><span style="color:#5c6c8c">1</span><span style="color:#2a3ec8">&nbsp;and&nbsp;</span><span style="color:#ee8a3c">y</span><span style="color:#4aa564">&nbsp;%&nbsp;</span><span style="color:#5c6c8c">2</span><span style="color:#4aa564">&nbsp;==&nbsp;</span><span style="color:#5c6c8c">0</span><span style="color:#2a3ec8">&nbsp;then</span></div>
<div class="a mono" style="left:-2px;top:543.1px;width:20px;text-align:right;color:#a89f98;letter-spacing:-1.5px">20</div>
<div class="a mono" style="left:31px;top:543.1px"><span style="color:#2a3ec8">&nbsp;&nbsp;if</span><span style="color:#222">&nbsp;c</span><span style="color:#4aa564">&nbsp;~=&nbsp;</span><span style="color:#5c6c8c">12</span><span style="color:#2a3ec8">&nbsp;then</span><span style="color:#222">&nbsp;c</span><span style="color:#4aa564">&nbsp;=&nbsp;</span><span style="color:#5c6c8c">12</span><span style="color:#2a3ec8">&nbsp;else</span><span style="color:#222">&nbsp;c</span><span style="color:#4aa564">&nbsp;=&nbsp;</span><span style="color:#5c6c8c">13</span><span style="color:#2a3ec8">&nbsp;end</span></div>
<div class="a mono" style="left:-2px;top:571.1px;width:20px;text-align:right;color:#a89f98;letter-spacing:-1.5px">21</div>
<div class="a mono" style="left:31px;top:571.1px"><span style="color:#2a3ec8">end</span></div>
</div>
<div class="a blk" style="left:929.5px;top:78.4px;width:1.5px;height:572px;"></div>
<div class="a " style="left:931px;top:78.4px;width:8px;height:572px;background:#c8cacf"></div>
<div class="a " style="left:931px;top:79px;width:8px;height:3px;background:#333"></div>
<div class="a blk" style="left:939px;top:78.4px;width:2px;height:572px;"></div>
<div class="a " style="left:941px;top:78.4px;width:7px;height:632px;background:#c3c5ca"></div>
<div class="a chk" style="left:941px;top:379px;width:7px;height:31px;border:1px solid #333"></div>
<div class="a " style="left:931px;top:536.5px;width:8px;height:1.8px;background:#222"></div>
<div class="a blk" style="left:948px;top:78.4px;width:1.2px;height:632px;"></div>
<div class="a " style="left:505.5px;top:650px;width:435.5px;height:28.2px;background:#c8c9cc"></div>
<div class="a dotb" style="left:508px;top:655px;width:259px;height:21px;background-color:#fdd835"></div>
<div class="a t " style="left:581px;top:659.0px;font-size:13px;letter-spacing:0px;transform:scaleX(0.8224);">RUN CODE (CTRL+R)</div>
<div class="a dotb" style="left:772px;top:654.6px;width:166px;height:21px;background-color:#c3c4c9"></div>
<div class="a t " style="left:774.5px;top:659.0px;font-size:13px;letter-spacing:0px;transform:scaleX(0.9273);">Auto run code as I type</div>
<div class="a " style="left:904px;top:657px;width:31px;height:16px;background:#3ea35a;border:1.5px solid #222;border-radius:3px"></div>
<div class="a " style="left:919px;top:658.5px;width:14.5px;height:13px;background:#d4d4d4;border-radius:2px"></div>
<div class="a " style="left:506.0px;top:678.2px;width:27.2px;height:32px;background:#dfe8f4"></div>
<div class="a t " style="left:506.0px;top:687.5px;width:27px;text-align:center;font-size:12.5px;color:#1a1a2a;letter-spacing:-1px">1</div>
<div class="a " style="left:533.1px;top:678.2px;width:27.2px;height:32px;background:#687490"></div>
<div class="a t " style="left:533.1px;top:687.5px;width:27px;text-align:center;font-size:12.5px;color:#1a1a2a;letter-spacing:-1px">2</div>
<div class="a " style="left:560.2px;top:678.2px;width:27.2px;height:32px;background:#15191b"></div>
<div class="a t " style="left:560.2px;top:687.5px;width:27px;text-align:center;font-size:12.5px;color:#1a1a2a;letter-spacing:-1px">3</div>
<div class="a " style="left:587.3px;top:678.2px;width:27.2px;height:32px;background:#f2a2a8"></div>
<div class="a t " style="left:587.3px;top:687.5px;width:27px;text-align:center;font-size:12.5px;color:#1a1a2a;letter-spacing:-1px">4</div>
<div class="a " style="left:614.4px;top:678.2px;width:27.2px;height:32px;background:#c55e9c"></div>
<div class="a t " style="left:614.4px;top:687.5px;width:27px;text-align:center;font-size:12.5px;color:#1a1a2a;letter-spacing:-1px">5</div>
<div class="a " style="left:641.5px;top:678.2px;width:27.2px;height:32px;background:#7a30a0"></div>
<div class="a t " style="left:641.5px;top:687.5px;width:27px;text-align:center;font-size:12.5px;color:#1a1a2a;letter-spacing:-1px">6</div>
<div class="a " style="left:668.6px;top:678.2px;width:27.2px;height:32px;background:#e8305a"></div>
<div class="a t " style="left:668.6px;top:687.5px;width:27px;text-align:center;font-size:12.5px;color:#1a1a2a;letter-spacing:-1px">7</div>
<div class="a " style="left:695.7px;top:678.2px;width:27.2px;height:32px;background:#ee7f5c"></div>
<div class="a t " style="left:695.7px;top:687.5px;width:27px;text-align:center;font-size:12.5px;color:#1a1a2a;letter-spacing:-1px">8</div>
<div class="a " style="left:722.8px;top:678.2px;width:27.2px;height:32px;background:#fbc271"></div>
<div class="a t " style="left:722.8px;top:687.5px;width:27px;text-align:center;font-size:12.5px;color:#1a1a2a;letter-spacing:-1px">9</div>
<div class="a " style="left:749.9px;top:678.2px;width:27.2px;height:32px;background:#80bd4f"></div>
<div class="a t " style="left:749.9px;top:687.5px;width:27px;text-align:center;font-size:12.5px;color:#1a1a2a;letter-spacing:-1px">10</div>
<div class="a " style="left:777.0px;top:678.2px;width:27.2px;height:32px;background:#3c9f5a"></div>
<div class="a t " style="left:777.0px;top:687.5px;width:27px;text-align:center;font-size:12.5px;color:#1a1a2a;letter-spacing:-1px">11</div>
<div class="a " style="left:804.1px;top:678.2px;width:27.2px;height:32px;background:#33306a"></div>
<div class="a t " style="left:804.1px;top:687.5px;width:27px;text-align:center;font-size:12.5px;color:#1a1a2a;letter-spacing:-1px">12</div>
<div class="a " style="left:831.2px;top:678.2px;width:27.2px;height:32px;background:#4452a8"></div>
<div class="a t " style="left:831.2px;top:687.5px;width:27px;text-align:center;font-size:12.5px;color:#1a1a2a;letter-spacing:-1px">13</div>
<div class="a " style="left:858.3px;top:678.2px;width:27.2px;height:32px;background:#6c9fe0"></div>
<div class="a t " style="left:858.3px;top:687.5px;width:27px;text-align:center;font-size:12.5px;color:#1a1a2a;letter-spacing:-1px">14</div>
<div class="a " style="left:885.4000000000001px;top:678.2px;width:27.2px;height:32px;background:#9e4e4e"></div>
<div class="a t " style="left:885.4000000000001px;top:687.5px;width:27px;text-align:center;font-size:12.5px;color:#1a1a2a;letter-spacing:-1px">15</div>
<div class="a " style="left:912.5px;top:678.2px;width:27.2px;height:32px;background:#4a2338"></div>
<div class="a t " style="left:912.5px;top:687.5px;width:27px;text-align:center;font-size:12.5px;color:#1a1a2a;letter-spacing:-1px">16</div>
<div class="a blk" style="left:497.5px;top:710px;width:775px;height:2px;"></div>
<div class="a chk" style="left:497.5px;top:712px;width:775px;height:7px;"></div>
<div class="a " style="left:949.2px;top:78.4px;width:320px;height:632px;background:#fdf1e8"></div>
<div class="a t " style="left:952px;top:82.5px;font-size:13px;letter-spacing:0px;transform:scaleX(0.8409);">OUTPUT IMAGE</div>
<svg width="294.5" height="524.4" viewBox="0 0 90 160" preserveAspectRatio="none" shape-rendering="crispEdges" style="position:absolute;left:952.2px;top:101.1px"><rect width="90" height="160" fill="#33306a"/><path fill="#e8305a" d="M0 0h1v1h-1zM2 0h3v1h-3zM6 0h1v1h-1zM28 0h1v1h-1zM30 0h3v1h-3zM34 0h3v1h-3zM38 0h1v1h-1zM60 0h1v1h-1zM62 0h3v1h-3zM66 0h3v1h-3zM70 0h1v1h-1zM0 1h6v1h-6zM30 1h8v1h-8zM62 1h8v1h-8zM0 2h3v1h-3zM4 2h2v1h-2zM32 2h3v1h-3zM36 2h2v1h-2zM64 2h3v1h-3zM68 2h2v1h-2zM2 3h3v1h-3zM34 3h3v1h-3zM66 3h3v1h-3zM4 4h1v1h-1zM36 4h1v1h-1zM68 4h1v1h-1zM18 13h1v1h-1zM50 13h1v1h-1zM82 13h1v1h-1zM17 14h2v1h-2zM20 14h1v1h-1zM49 14h2v1h-2zM52 14h1v1h-1zM81 14h2v1h-2zM84 14h1v1h-1zM17 15h6v1h-6zM49 15h6v1h-6zM81 15h6v1h-6zM16 16h1v1h-1zM18 16h3v1h-3zM22 16h3v1h-3zM48 16h1v1h-1zM50 16h3v1h-3zM54 16h3v1h-3zM80 16h1v1h-1zM82 16h3v1h-3zM86 16h3v1h-3zM16 17h11v1h-11zM48 17h11v1h-11zM80 17h10v1h-10zM16 18h3v1h-3zM20 18h3v1h-3zM24 18h3v1h-3zM28 18h1v1h-1zM48 18h3v1h-3zM52 18h3v1h-3zM56 18h3v1h-3zM60 18h1v1h-1zM80 18h3v1h-3zM84 18h3v1h-3zM88 18h2v1h-2zM15 19h14v1h-14zM47 19h14v1h-14zM79 19h11v1h-11zM14 20h3v1h-3zM18 20h3v1h-3zM22 20h3v1h-3zM26 20h3v1h-3zM46 20h3v1h-3zM50 20h3v1h-3zM54 20h3v1h-3zM58 20h3v1h-3zM78 20h3v1h-3zM82 20h3v1h-3zM86 20h3v1h-3zM14 21h14v1h-14zM46 21h14v1h-14zM78 21h12v1h-12zM13 22h2v1h-2zM16 22h3v1h-3zM20 22h3v1h-3zM24 22h3v1h-3zM45 22h2v1h-2zM48 22h3v1h-3zM52 22h3v1h-3zM56 22h3v1h-3zM77 22h2v1h-2zM80 22h3v1h-3zM84 22h3v1h-3zM88 22h2v1h-2zM13 23h14v1h-14zM45 23h14v1h-14zM77 23h13v1h-13zM12 24h1v1h-1zM14 24h3v1h-3zM18 24h3v1h-3zM22 24h3v1h-3zM26 24h1v1h-1zM44 24h1v1h-1zM46 24h3v1h-3zM50 24h3v1h-3zM54 24h3v1h-3zM58 24h1v1h-1zM76 24h1v1h-1zM78 24h3v1h-3zM82 24h3v1h-3zM86 24h3v1h-3zM14 25h12v1h-12zM46 25h12v1h-12zM78 25h12v1h-12zM16 26h3v1h-3zM20 26h3v1h-3zM24 26h2v1h-2zM48 26h3v1h-3zM52 26h3v1h-3zM56 26h2v1h-2zM80 26h3v1h-3zM84 26h3v1h-3zM88 26h2v1h-2zM18 27h7v1h-7zM50 27h7v1h-7zM82 27h7v1h-7zM20 28h1v1h-1zM22 28h3v1h-3zM52 28h1v1h-1zM54 28h3v1h-3zM84 28h1v1h-1zM86 28h3v1h-3zM22 29h2v1h-2zM54 29h2v1h-2zM86 29h2v1h-2zM5 39h2v1h-2zM37 39h2v1h-2zM69 39h2v1h-2zM4 40h1v1h-1zM6 40h3v1h-3zM36 40h1v1h-1zM38 40h3v1h-3zM68 40h1v1h-1zM70 40h3v1h-3zM4 41h7v1h-7zM36 41h7v1h-7zM68 41h7v1h-7zM4 42h3v1h-3zM8 42h3v1h-3zM12 42h1v1h-1zM36 42h3v1h-3zM40 42h3v1h-3zM44 42h1v1h-1zM68 42h3v1h-3zM72 42h3v1h-3zM76 42h1v1h-1zM3 43h12v1h-12zM35 43h12v1h-12zM67 43h12v1h-12zM2 44h3v1h-3zM6 44h3v1h-3zM10 44h3v1h-3zM14 44h3v1h-3zM34 44h3v1h-3zM38 44h3v1h-3zM42 44h3v1h-3zM46 44h3v1h-3zM66 44h3v1h-3zM70 44h3v1h-3zM74 44h3v1h-3zM78 44h3v1h-3zM2 45h14v1h-14zM34 45h14v1h-14zM66 45h14v1h-14zM1 46h2v1h-2zM4 46h3v1h-3zM8 46h3v1h-3zM12 46h3v1h-3zM33 46h2v1h-2zM36 46h3v1h-3zM40 46h3v1h-3zM44 46h3v1h-3zM65 46h2v1h-2zM68 46h3v1h-3zM72 46h3v1h-3zM76 46h3v1h-3zM1 47h14v1h-14zM33 47h14v1h-14zM65 47h14v1h-14zM0 48h1v1h-1zM2 48h3v1h-3zM6 48h3v1h-3zM10 48h3v1h-3zM14 48h1v1h-1zM32 48h1v1h-1zM34 48h3v1h-3zM38 48h3v1h-3zM42 48h3v1h-3zM46 48h1v1h-1zM64 48h1v1h-1zM66 48h3v1h-3zM70 48h3v1h-3zM74 48h3v1h-3zM78 48h1v1h-1zM0 49h14v1h-14zM32 49h14v1h-14zM64 49h14v1h-14zM0 50h3v1h-3zM4 50h3v1h-3zM8 50h3v1h-3zM12 50h2v1h-2zM32 50h3v1h-3zM36 50h3v1h-3zM40 50h3v1h-3zM44 50h2v1h-2zM64 50h3v1h-3zM68 50h3v1h-3zM72 50h3v1h-3zM76 50h2v1h-2zM2 51h11v1h-11zM34 51h11v1h-11zM66 51h11v1h-11zM4 52h1v1h-1zM6 52h3v1h-3zM10 52h3v1h-3zM36 52h1v1h-1zM38 52h3v1h-3zM42 52h3v1h-3zM68 52h1v1h-1zM70 52h3v1h-3zM74 52h3v1h-3zM6 53h6v1h-6zM38 53h6v1h-6zM70 53h6v1h-6zM8 54h3v1h-3zM40 54h3v1h-3zM72 54h3v1h-3zM10 55h1v1h-1zM42 55h1v1h-1zM74 55h1v1h-1zM24 64h1v1h-1zM56 64h1v1h-1zM88 64h1v1h-1zM24 65h3v1h-3zM56 65h3v1h-3zM88 65h2v1h-2zM24 66h3v1h-3zM28 66h1v1h-1zM56 66h3v1h-3zM60 66h1v1h-1zM88 66h2v1h-2zM23 67h8v1h-8zM55 67h8v1h-8zM87 67h3v1h-3zM0 68h1v1h-1zM22 68h3v1h-3zM26 68h3v1h-3zM30 68h3v1h-3zM54 68h3v1h-3zM58 68h3v1h-3zM62 68h3v1h-3zM86 68h3v1h-3zM0 69h3v1h-3zM22 69h13v1h-13zM54 69h13v1h-13zM86 69h4v1h-4zM0 70h3v1h-3zM21 70h2v1h-2zM24 70h3v1h-3zM28 70h3v1h-3zM32 70h3v1h-3zM53 70h2v1h-2zM56 70h3v1h-3zM60 70h3v1h-3zM64 70h3v1h-3zM85 70h2v1h-2zM88 70h2v1h-2zM0 71h3v1h-3zM21 71h14v1h-14zM53 71h14v1h-14zM85 71h5v1h-5zM0 72h1v1h-1zM2 72h1v1h-1zM20 72h1v1h-1zM22 72h3v1h-3zM26 72h3v1h-3zM30 72h3v1h-3zM34 72h1v1h-1zM52 72h1v1h-1zM54 72h3v1h-3zM58 72h3v1h-3zM62 72h3v1h-3zM66 72h1v1h-1zM84 72h1v1h-1zM86 72h3v1h-3zM0 73h2v1h-2zM20 73h14v1h-14zM52 73h14v1h-14zM84 73h6v1h-6zM0 74h2v1h-2zM20 74h3v1h-3zM24 74h3v1h-3zM28 74h3v1h-3zM32 74h2v1h-2zM52 74h3v1h-3zM56 74h3v1h-3zM60 74h3v1h-3zM64 74h2v1h-2zM84 74h3v1h-3zM88 74h2v1h-2zM0 75h1v1h-1zM19 75h14v1h-14zM51 75h14v1h-14zM83 75h7v1h-7zM0 76h1v1h-1zM20 76h1v1h-1zM22 76h3v1h-3zM26 76h3v1h-3zM30 76h3v1h-3zM52 76h1v1h-1zM54 76h3v1h-3zM58 76h3v1h-3zM62 76h3v1h-3zM84 76h1v1h-1zM86 76h3v1h-3zM22 77h10v1h-10zM54 77h10v1h-10zM86 77h4v1h-4zM24 78h3v1h-3zM28 78h3v1h-3zM56 78h3v1h-3zM60 78h3v1h-3zM88 78h2v1h-2zM26 79h5v1h-5zM58 79h5v1h-5zM28 80h1v1h-1zM30 80h1v1h-1zM60 80h1v1h-1zM62 80h1v1h-1zM12 90h1v1h-1zM44 90h1v1h-1zM76 90h1v1h-1zM11 91h4v1h-4zM43 91h4v1h-4zM75 91h4v1h-4zM10 92h3v1h-3zM14 92h3v1h-3zM42 92h3v1h-3zM46 92h3v1h-3zM74 92h3v1h-3zM78 92h3v1h-3zM10 93h9v1h-9zM42 93h9v1h-9zM74 93h9v1h-9zM9 94h2v1h-2zM12 94h3v1h-3zM16 94h3v1h-3zM20 94h1v1h-1zM41 94h2v1h-2zM44 94h3v1h-3zM48 94h3v1h-3zM52 94h1v1h-1zM73 94h2v1h-2zM76 94h3v1h-3zM80 94h3v1h-3zM84 94h1v1h-1zM9 95h14v1h-14zM41 95h14v1h-14zM73 95h14v1h-14zM8 96h1v1h-1zM10 96h3v1h-3zM14 96h3v1h-3zM18 96h3v1h-3zM22 96h1v1h-1zM40 96h1v1h-1zM42 96h3v1h-3zM46 96h3v1h-3zM50 96h3v1h-3zM54 96h1v1h-1zM72 96h1v1h-1zM74 96h3v1h-3zM78 96h3v1h-3zM82 96h3v1h-3zM86 96h1v1h-1zM8 97h14v1h-14zM40 97h14v1h-14zM72 97h14v1h-14zM8 98h3v1h-3zM12 98h3v1h-3zM16 98h3v1h-3zM20 98h2v1h-2zM40 98h3v1h-3zM44 98h3v1h-3zM48 98h3v1h-3zM52 98h2v1h-2zM72 98h3v1h-3zM76 98h3v1h-3zM80 98h3v1h-3zM84 98h2v1h-2zM7 99h14v1h-14zM39 99h14v1h-14zM71 99h14v1h-14zM6 100h3v1h-3zM10 100h3v1h-3zM14 100h3v1h-3zM18 100h3v1h-3zM38 100h3v1h-3zM42 100h3v1h-3zM46 100h3v1h-3zM50 100h3v1h-3zM70 100h3v1h-3zM74 100h3v1h-3zM78 100h3v1h-3zM82 100h3v1h-3zM6 101h14v1h-14zM38 101h14v1h-14zM70 101h14v1h-14zM8 102h3v1h-3zM12 102h3v1h-3zM16 102h3v1h-3zM40 102h3v1h-3zM44 102h3v1h-3zM48 102h3v1h-3zM72 102h3v1h-3zM76 102h3v1h-3zM80 102h3v1h-3zM10 103h9v1h-9zM42 103h9v1h-9zM74 103h9v1h-9zM12 104h1v1h-1zM14 104h3v1h-3zM18 104h1v1h-1zM44 104h1v1h-1zM46 104h3v1h-3zM50 104h1v1h-1zM76 104h1v1h-1zM78 104h3v1h-3zM82 104h1v1h-1zM14 105h4v1h-4zM46 105h4v1h-4zM78 105h4v1h-4zM16 106h2v1h-2zM48 106h2v1h-2zM80 106h2v1h-2zM0 116h1v1h-1zM30 116h3v1h-3zM62 116h3v1h-3zM0 117h3v1h-3zM30 117h5v1h-5zM62 117h5v1h-5zM0 118h3v1h-3zM4 118h1v1h-1zM29 118h2v1h-2zM32 118h3v1h-3zM36 118h1v1h-1zM61 118h2v1h-2zM64 118h3v1h-3zM68 118h1v1h-1zM0 119h7v1h-7zM29 119h10v1h-10zM61 119h10v1h-10zM0 120h1v1h-1zM2 120h3v1h-3zM6 120h3v1h-3zM28 120h1v1h-1zM30 120h3v1h-3zM34 120h3v1h-3zM38 120h3v1h-3zM60 120h1v1h-1zM62 120h3v1h-3zM66 120h3v1h-3zM70 120h3v1h-3zM0 121h10v1h-10zM28 121h14v1h-14zM60 121h14v1h-14zM0 122h3v1h-3zM4 122h3v1h-3zM8 122h2v1h-2zM28 122h3v1h-3zM32 122h3v1h-3zM36 122h3v1h-3zM40 122h2v1h-2zM60 122h3v1h-3zM64 122h3v1h-3zM68 122h3v1h-3zM72 122h2v1h-2zM0 123h9v1h-9zM27 123h14v1h-14zM59 123h14v1h-14zM0 124h1v1h-1zM2 124h3v1h-3zM6 124h3v1h-3zM26 124h3v1h-3zM30 124h3v1h-3zM34 124h3v1h-3zM38 124h3v1h-3zM58 124h3v1h-3zM62 124h3v1h-3zM66 124h3v1h-3zM70 124h3v1h-3zM0 125h8v1h-8zM26 125h14v1h-14zM58 125h14v1h-14zM0 126h3v1h-3zM4 126h3v1h-3zM25 126h2v1h-2zM28 126h3v1h-3zM32 126h3v1h-3zM36 126h3v1h-3zM57 126h2v1h-2zM60 126h3v1h-3zM64 126h3v1h-3zM68 126h3v1h-3zM89 126h1v1h-1zM0 127h7v1h-7zM26 127h13v1h-13zM58 127h13v1h-13zM0 128h1v1h-1zM2 128h3v1h-3zM6 128h1v1h-1zM28 128h1v1h-1zM30 128h3v1h-3zM34 128h3v1h-3zM38 128h1v1h-1zM60 128h1v1h-1zM62 128h3v1h-3zM66 128h3v1h-3zM70 128h1v1h-1zM0 129h6v1h-6zM30 129h8v1h-8zM62 129h8v1h-8zM0 130h3v1h-3zM4 130h2v1h-2zM32 130h3v1h-3zM36 130h2v1h-2zM64 130h3v1h-3zM68 130h2v1h-2zM2 131h3v1h-3zM34 131h3v1h-3zM66 131h3v1h-3zM4 132h1v1h-1zM36 132h1v1h-1zM68 132h1v1h-1zM18 141h1v1h-1zM50 141h1v1h-1zM82 141h1v1h-1zM17 142h2v1h-2zM20 142h1v1h-1zM49 142h2v1h-2zM52 142h1v1h-1zM81 142h2v1h-2zM84 142h1v1h-1zM17 143h6v1h-6zM49 143h6v1h-6zM81 143h6v1h-6zM16 144h1v1h-1zM18 144h3v1h-3zM22 144h3v1h-3zM48 144h1v1h-1zM50 144h3v1h-3zM54 144h3v1h-3zM80 144h1v1h-1zM82 144h3v1h-3zM86 144h3v1h-3zM16 145h11v1h-11zM48 145h11v1h-11zM80 145h10v1h-10zM16 146h3v1h-3zM20 146h3v1h-3zM24 146h3v1h-3zM28 146h1v1h-1zM48 146h3v1h-3zM52 146h3v1h-3zM56 146h3v1h-3zM60 146h1v1h-1zM80 146h3v1h-3zM84 146h3v1h-3zM88 146h2v1h-2zM15 147h14v1h-14zM47 147h14v1h-14zM79 147h11v1h-11zM14 148h3v1h-3zM18 148h3v1h-3zM22 148h3v1h-3zM26 148h3v1h-3zM46 148h3v1h-3zM50 148h3v1h-3zM54 148h3v1h-3zM58 148h3v1h-3zM78 148h3v1h-3zM82 148h3v1h-3zM86 148h3v1h-3zM14 149h14v1h-14zM46 149h14v1h-14zM78 149h12v1h-12zM13 150h2v1h-2zM16 150h3v1h-3zM20 150h3v1h-3zM24 150h3v1h-3zM45 150h2v1h-2zM48 150h3v1h-3zM52 150h3v1h-3zM56 150h3v1h-3zM77 150h2v1h-2zM80 150h3v1h-3zM84 150h3v1h-3zM88 150h2v1h-2zM13 151h14v1h-14zM45 151h14v1h-14zM77 151h13v1h-13zM12 152h1v1h-1zM14 152h3v1h-3zM18 152h3v1h-3zM22 152h3v1h-3zM26 152h1v1h-1zM44 152h1v1h-1zM46 152h3v1h-3zM50 152h3v1h-3zM54 152h3v1h-3zM58 152h1v1h-1zM76 152h1v1h-1zM78 152h3v1h-3zM82 152h3v1h-3zM86 152h3v1h-3zM14 153h12v1h-12zM46 153h12v1h-12zM78 153h12v1h-12zM16 154h3v1h-3zM20 154h3v1h-3zM24 154h2v1h-2zM48 154h3v1h-3zM52 154h3v1h-3zM56 154h2v1h-2zM80 154h3v1h-3zM84 154h3v1h-3zM88 154h2v1h-2zM18 155h7v1h-7zM50 155h7v1h-7zM82 155h7v1h-7zM20 156h1v1h-1zM22 156h3v1h-3zM52 156h1v1h-1zM54 156h3v1h-3zM84 156h1v1h-1zM86 156h3v1h-3zM22 157h2v1h-2zM54 157h2v1h-2zM86 157h2v1h-2z"/><path fill="#4452a8" d="M8 0h1v1h-1zM10 0h3v1h-3zM14 0h3v1h-3zM18 0h3v1h-3zM22 0h1v1h-1zM40 0h1v1h-1zM42 0h3v1h-3zM46 0h3v1h-3zM50 0h3v1h-3zM54 0h1v1h-1zM72 0h1v1h-1zM74 0h3v1h-3zM78 0h3v1h-3zM82 0h3v1h-3zM86 0h1v1h-1zM8 1h14v1h-14zM40 1h14v1h-14zM72 1h14v1h-14zM8 2h3v1h-3zM12 2h3v1h-3zM16 2h3v1h-3zM20 2h2v1h-2zM40 2h3v1h-3zM44 2h3v1h-3zM48 2h3v1h-3zM52 2h2v1h-2zM72 2h3v1h-3zM76 2h3v1h-3zM80 2h3v1h-3zM84 2h2v1h-2zM7 3h14v1h-14zM39 3h14v1h-14zM71 3h14v1h-14zM6 4h3v1h-3zM10 4h3v1h-3zM14 4h3v1h-3zM18 4h3v1h-3zM38 4h3v1h-3zM42 4h3v1h-3zM46 4h3v1h-3zM50 4h3v1h-3zM70 4h3v1h-3zM74 4h3v1h-3zM78 4h3v1h-3zM82 4h3v1h-3zM6 5h14v1h-14zM38 5h14v1h-14zM70 5h14v1h-14zM8 6h3v1h-3zM12 6h3v1h-3zM16 6h3v1h-3zM40 6h3v1h-3zM44 6h3v1h-3zM48 6h3v1h-3zM72 6h3v1h-3zM76 6h3v1h-3zM80 6h3v1h-3zM10 7h9v1h-9zM42 7h9v1h-9zM74 7h9v1h-9zM5 8h1v1h-1zM12 8h1v1h-1zM14 8h3v1h-3zM18 8h1v1h-1zM37 8h1v1h-1zM44 8h1v1h-1zM46 8h3v1h-3zM50 8h1v1h-1zM69 8h1v1h-1zM76 8h1v1h-1zM78 8h3v1h-3zM82 8h1v1h-1zM14 9h4v1h-4zM46 9h4v1h-4zM78 9h4v1h-4zM3 10h1v1h-1zM7 10h1v1h-1zM11 10h1v1h-1zM16 10h2v1h-2zM35 10h1v1h-1zM39 10h1v1h-1zM43 10h1v1h-1zM48 10h2v1h-2zM67 10h1v1h-1zM71 10h1v1h-1zM75 10h1v1h-1zM80 10h2v1h-2zM5 12h1v1h-1zM9 12h1v1h-1zM13 12h1v1h-1zM37 12h1v1h-1zM41 12h1v1h-1zM45 12h1v1h-1zM69 12h1v1h-1zM73 12h1v1h-1zM77 12h1v1h-1zM3 14h1v1h-1zM7 14h1v1h-1zM11 14h1v1h-1zM15 14h1v1h-1zM35 14h1v1h-1zM39 14h1v1h-1zM43 14h1v1h-1zM47 14h1v1h-1zM67 14h1v1h-1zM71 14h1v1h-1zM75 14h1v1h-1zM79 14h1v1h-1zM1 16h1v1h-1zM5 16h1v1h-1zM9 16h1v1h-1zM13 16h1v1h-1zM33 16h1v1h-1zM37 16h1v1h-1zM41 16h1v1h-1zM45 16h1v1h-1zM65 16h1v1h-1zM69 16h1v1h-1zM73 16h1v1h-1zM77 16h1v1h-1zM3 18h1v1h-1zM7 18h1v1h-1zM11 18h1v1h-1zM35 18h1v1h-1zM39 18h1v1h-1zM43 18h1v1h-1zM67 18h1v1h-1zM71 18h1v1h-1zM75 18h1v1h-1zM0 20h1v1h-1zM5 20h1v1h-1zM9 20h1v1h-1zM30 20h3v1h-3zM37 20h1v1h-1zM41 20h1v1h-1zM62 20h3v1h-3zM69 20h1v1h-1zM73 20h1v1h-1zM0 21h3v1h-3zM30 21h5v1h-5zM62 21h5v1h-5zM0 22h3v1h-3zM4 22h1v1h-1zM11 22h1v1h-1zM29 22h2v1h-2zM32 22h3v1h-3zM36 22h1v1h-1zM43 22h1v1h-1zM61 22h2v1h-2zM64 22h3v1h-3zM68 22h1v1h-1zM75 22h1v1h-1zM0 23h7v1h-7zM29 23h10v1h-10zM61 23h10v1h-10zM0 24h1v1h-1zM2 24h3v1h-3zM6 24h3v1h-3zM28 24h1v1h-1zM30 24h3v1h-3zM34 24h3v1h-3zM38 24h3v1h-3zM60 24h1v1h-1zM62 24h3v1h-3zM66 24h3v1h-3zM70 24h3v1h-3zM0 25h10v1h-10zM28 25h14v1h-14zM60 25h14v1h-14zM0 26h3v1h-3zM4 26h3v1h-3zM8 26h2v1h-2zM28 26h3v1h-3zM32 26h3v1h-3zM36 26h3v1h-3zM40 26h2v1h-2zM60 26h3v1h-3zM64 26h3v1h-3zM68 26h3v1h-3zM72 26h2v1h-2zM0 27h9v1h-9zM27 27h14v1h-14zM59 27h14v1h-14zM0 28h1v1h-1zM2 28h3v1h-3zM6 28h3v1h-3zM26 28h3v1h-3zM30 28h3v1h-3zM34 28h3v1h-3zM38 28h3v1h-3zM58 28h3v1h-3zM62 28h3v1h-3zM66 28h3v1h-3zM70 28h3v1h-3zM0 29h8v1h-8zM26 29h14v1h-14zM58 29h14v1h-14zM0 30h3v1h-3zM4 30h3v1h-3zM25 30h2v1h-2zM28 30h3v1h-3zM32 30h3v1h-3zM36 30h3v1h-3zM57 30h2v1h-2zM60 30h3v1h-3zM64 30h3v1h-3zM68 30h3v1h-3zM89 30h1v1h-1zM0 31h7v1h-7zM26 31h13v1h-13zM58 31h13v1h-13zM0 32h1v1h-1zM2 32h3v1h-3zM6 32h1v1h-1zM28 32h1v1h-1zM30 32h3v1h-3zM34 32h3v1h-3zM38 32h1v1h-1zM60 32h1v1h-1zM62 32h3v1h-3zM66 32h3v1h-3zM70 32h1v1h-1zM0 33h6v1h-6zM30 33h8v1h-8zM62 33h8v1h-8zM0 34h3v1h-3zM4 34h2v1h-2zM23 34h1v1h-1zM27 34h1v1h-1zM32 34h3v1h-3zM36 34h2v1h-2zM55 34h1v1h-1zM59 34h1v1h-1zM64 34h3v1h-3zM68 34h2v1h-2zM87 34h1v1h-1zM2 35h3v1h-3zM34 35h3v1h-3zM66 35h3v1h-3zM4 36h1v1h-1zM25 36h1v1h-1zM29 36h1v1h-1zM36 36h1v1h-1zM57 36h1v1h-1zM61 36h1v1h-1zM68 36h1v1h-1zM89 36h1v1h-1zM3 38h1v1h-1zM23 38h1v1h-1zM27 38h1v1h-1zM31 38h1v1h-1zM35 38h1v1h-1zM55 38h1v1h-1zM59 38h1v1h-1zM63 38h1v1h-1zM67 38h1v1h-1zM87 38h1v1h-1zM1 40h1v1h-1zM21 40h1v1h-1zM25 40h1v1h-1zM29 40h1v1h-1zM33 40h1v1h-1zM53 40h1v1h-1zM57 40h1v1h-1zM61 40h1v1h-1zM65 40h1v1h-1zM85 40h1v1h-1zM89 40h1v1h-1zM19 42h1v1h-1zM23 42h1v1h-1zM27 42h1v1h-1zM31 42h1v1h-1zM51 42h1v1h-1zM55 42h1v1h-1zM59 42h1v1h-1zM63 42h1v1h-1zM83 42h1v1h-1zM87 42h1v1h-1zM21 44h1v1h-1zM25 44h1v1h-1zM29 44h1v1h-1zM53 44h1v1h-1zM57 44h1v1h-1zM61 44h1v1h-1zM85 44h1v1h-1zM89 44h1v1h-1zM18 45h1v1h-1zM50 45h1v1h-1zM82 45h1v1h-1zM17 46h2v1h-2zM20 46h1v1h-1zM27 46h1v1h-1zM31 46h1v1h-1zM49 46h2v1h-2zM52 46h1v1h-1zM59 46h1v1h-1zM63 46h1v1h-1zM81 46h2v1h-2zM84 46h1v1h-1zM17 47h6v1h-6zM49 47h6v1h-6zM81 47h6v1h-6zM16 48h1v1h-1zM18 48h3v1h-3zM22 48h3v1h-3zM29 48h1v1h-1zM48 48h1v1h-1zM50 48h3v1h-3zM54 48h3v1h-3zM61 48h1v1h-1zM80 48h1v1h-1zM82 48h3v1h-3zM86 48h3v1h-3zM16 49h11v1h-11zM48 49h11v1h-11zM80 49h10v1h-10zM16 50h3v1h-3zM20 50h3v1h-3zM24 50h3v1h-3zM28 50h1v1h-1zM48 50h3v1h-3zM52 50h3v1h-3zM56 50h3v1h-3zM60 50h1v1h-1zM80 50h3v1h-3zM84 50h3v1h-3zM88 50h2v1h-2zM15 51h14v1h-14zM47 51h14v1h-14zM79 51h11v1h-11zM14 52h3v1h-3zM18 52h3v1h-3zM22 52h3v1h-3zM26 52h3v1h-3zM46 52h3v1h-3zM50 52h3v1h-3zM54 52h3v1h-3zM58 52h3v1h-3zM78 52h3v1h-3zM82 52h3v1h-3zM86 52h3v1h-3zM14 53h14v1h-14zM46 53h14v1h-14zM78 53h12v1h-12zM13 54h2v1h-2zM16 54h3v1h-3zM20 54h3v1h-3zM24 54h3v1h-3zM45 54h2v1h-2zM48 54h3v1h-3zM52 54h3v1h-3zM56 54h3v1h-3zM77 54h2v1h-2zM80 54h3v1h-3zM84 54h3v1h-3zM88 54h2v1h-2zM13 55h14v1h-14zM45 55h14v1h-14zM77 55h13v1h-13zM12 56h1v1h-1zM14 56h3v1h-3zM18 56h3v1h-3zM22 56h3v1h-3zM26 56h1v1h-1zM44 56h1v1h-1zM46 56h3v1h-3zM50 56h3v1h-3zM54 56h3v1h-3zM58 56h1v1h-1zM76 56h1v1h-1zM78 56h3v1h-3zM82 56h3v1h-3zM86 56h3v1h-3zM14 57h12v1h-12zM46 57h12v1h-12zM78 57h12v1h-12zM11 58h1v1h-1zM16 58h3v1h-3zM20 58h3v1h-3zM24 58h2v1h-2zM43 58h1v1h-1zM48 58h3v1h-3zM52 58h3v1h-3zM56 58h2v1h-2zM75 58h1v1h-1zM80 58h3v1h-3zM84 58h3v1h-3zM88 58h2v1h-2zM18 59h7v1h-7zM50 59h7v1h-7zM82 59h7v1h-7zM13 60h1v1h-1zM20 60h1v1h-1zM22 60h3v1h-3zM45 60h1v1h-1zM52 60h1v1h-1zM54 60h3v1h-3zM77 60h1v1h-1zM84 60h1v1h-1zM86 60h3v1h-3zM22 61h2v1h-2zM54 61h2v1h-2zM86 61h2v1h-2zM11 62h1v1h-1zM15 62h1v1h-1zM19 62h1v1h-1zM43 62h1v1h-1zM47 62h1v1h-1zM51 62h1v1h-1zM75 62h1v1h-1zM79 62h1v1h-1zM83 62h1v1h-1zM9 64h1v1h-1zM13 64h1v1h-1zM17 64h1v1h-1zM21 64h1v1h-1zM41 64h1v1h-1zM45 64h1v1h-1zM49 64h1v1h-1zM53 64h1v1h-1zM73 64h1v1h-1zM77 64h1v1h-1zM81 64h1v1h-1zM85 64h1v1h-1zM7 66h1v1h-1zM11 66h1v1h-1zM15 66h1v1h-1zM19 66h1v1h-1zM39 66h1v1h-1zM43 66h1v1h-1zM47 66h1v1h-1zM51 66h1v1h-1zM71 66h1v1h-1zM75 66h1v1h-1zM79 66h1v1h-1zM83 66h1v1h-1zM9 68h1v1h-1zM13 68h1v1h-1zM17 68h1v1h-1zM41 68h1v1h-1zM45 68h1v1h-1zM49 68h1v1h-1zM73 68h1v1h-1zM77 68h1v1h-1zM81 68h1v1h-1zM11 70h1v1h-1zM15 70h1v1h-1zM19 70h1v1h-1zM43 70h1v1h-1zM47 70h1v1h-1zM51 70h1v1h-1zM75 70h1v1h-1zM79 70h1v1h-1zM83 70h1v1h-1zM5 71h2v1h-2zM37 71h2v1h-2zM69 71h2v1h-2zM4 72h1v1h-1zM6 72h3v1h-3zM13 72h1v1h-1zM17 72h1v1h-1zM36 72h1v1h-1zM38 72h3v1h-3zM45 72h1v1h-1zM49 72h1v1h-1zM68 72h1v1h-1zM70 72h3v1h-3zM77 72h1v1h-1zM81 72h1v1h-1zM4 73h7v1h-7zM36 73h7v1h-7zM68 73h7v1h-7zM4 74h3v1h-3zM8 74h3v1h-3zM12 74h1v1h-1zM36 74h3v1h-3zM40 74h3v1h-3zM44 74h1v1h-1zM68 74h3v1h-3zM72 74h3v1h-3zM76 74h1v1h-1zM3 75h12v1h-12zM35 75h12v1h-12zM67 75h12v1h-12zM2 76h3v1h-3zM6 76h3v1h-3zM10 76h3v1h-3zM14 76h3v1h-3zM34 76h3v1h-3zM38 76h3v1h-3zM42 76h3v1h-3zM46 76h3v1h-3zM66 76h3v1h-3zM70 76h3v1h-3zM74 76h3v1h-3zM78 76h3v1h-3zM2 77h14v1h-14zM34 77h14v1h-14zM66 77h14v1h-14zM1 78h2v1h-2zM4 78h3v1h-3zM8 78h3v1h-3zM12 78h3v1h-3zM33 78h2v1h-2zM36 78h3v1h-3zM40 78h3v1h-3zM44 78h3v1h-3zM65 78h2v1h-2zM68 78h3v1h-3zM72 78h3v1h-3zM76 78h3v1h-3zM1 79h14v1h-14zM33 79h14v1h-14zM65 79h14v1h-14zM0 80h1v1h-1zM2 80h3v1h-3zM6 80h3v1h-3zM10 80h3v1h-3zM14 80h1v1h-1zM32 80h1v1h-1zM34 80h3v1h-3zM38 80h3v1h-3zM42 80h3v1h-3zM46 80h1v1h-1zM64 80h1v1h-1zM66 80h3v1h-3zM70 80h3v1h-3zM74 80h3v1h-3zM78 80h1v1h-1zM0 81h14v1h-14zM32 81h14v1h-14zM64 81h14v1h-14zM0 82h3v1h-3zM4 82h3v1h-3zM8 82h3v1h-3zM12 82h2v1h-2zM32 82h3v1h-3zM36 82h3v1h-3zM40 82h3v1h-3zM44 82h2v1h-2zM64 82h3v1h-3zM68 82h3v1h-3zM72 82h3v1h-3zM76 82h2v1h-2zM2 83h11v1h-11zM34 83h11v1h-11zM66 83h11v1h-11zM4 84h1v1h-1zM6 84h3v1h-3zM10 84h3v1h-3zM36 84h1v1h-1zM38 84h3v1h-3zM42 84h3v1h-3zM68 84h1v1h-1zM70 84h3v1h-3zM74 84h3v1h-3zM6 85h6v1h-6zM38 85h6v1h-6zM70 85h6v1h-6zM3 86h1v1h-1zM8 86h3v1h-3zM31 86h1v1h-1zM35 86h1v1h-1zM40 86h3v1h-3zM63 86h1v1h-1zM67 86h1v1h-1zM72 86h3v1h-3zM10 87h1v1h-1zM42 87h1v1h-1zM74 87h1v1h-1zM1 88h1v1h-1zM5 88h1v1h-1zM29 88h1v1h-1zM33 88h1v1h-1zM37 88h1v1h-1zM61 88h1v1h-1zM65 88h1v1h-1zM69 88h1v1h-1zM3 90h1v1h-1zM7 90h1v1h-1zM27 90h1v1h-1zM31 90h1v1h-1zM35 90h1v1h-1zM39 90h1v1h-1zM59 90h1v1h-1zM63 90h1v1h-1zM67 90h1v1h-1zM71 90h1v1h-1zM1 92h1v1h-1zM5 92h1v1h-1zM29 92h1v1h-1zM33 92h1v1h-1zM37 92h1v1h-1zM61 92h1v1h-1zM65 92h1v1h-1zM69 92h1v1h-1zM3 94h1v1h-1zM7 94h1v1h-1zM27 94h1v1h-1zM31 94h1v1h-1zM35 94h1v1h-1zM39 94h1v1h-1zM59 94h1v1h-1zM63 94h1v1h-1zM67 94h1v1h-1zM71 94h1v1h-1zM1 96h1v1h-1zM5 96h1v1h-1zM24 96h1v1h-1zM29 96h1v1h-1zM33 96h1v1h-1zM37 96h1v1h-1zM56 96h1v1h-1zM61 96h1v1h-1zM65 96h1v1h-1zM69 96h1v1h-1zM88 96h1v1h-1zM24 97h3v1h-3zM56 97h3v1h-3zM88 97h2v1h-2zM3 98h1v1h-1zM24 98h3v1h-3zM28 98h1v1h-1zM35 98h1v1h-1zM56 98h3v1h-3zM60 98h1v1h-1zM67 98h1v1h-1zM88 98h2v1h-2zM23 99h8v1h-8zM55 99h8v1h-8zM87 99h3v1h-3zM0 100h1v1h-1zM22 100h3v1h-3zM26 100h3v1h-3zM30 100h3v1h-3zM54 100h3v1h-3zM58 100h3v1h-3zM62 100h3v1h-3zM86 100h3v1h-3zM0 101h3v1h-3zM22 101h13v1h-13zM54 101h13v1h-13zM86 101h4v1h-4zM0 102h3v1h-3zM21 102h2v1h-2zM24 102h3v1h-3zM28 102h3v1h-3zM32 102h3v1h-3zM53 102h2v1h-2zM56 102h3v1h-3zM60 102h3v1h-3zM64 102h3v1h-3zM85 102h2v1h-2zM88 102h2v1h-2zM0 103h3v1h-3zM21 103h14v1h-14zM53 103h14v1h-14zM85 103h5v1h-5zM0 104h1v1h-1zM2 104h1v1h-1zM20 104h1v1h-1zM22 104h3v1h-3zM26 104h3v1h-3zM30 104h3v1h-3zM34 104h1v1h-1zM52 104h1v1h-1zM54 104h3v1h-3zM58 104h3v1h-3zM62 104h3v1h-3zM66 104h1v1h-1zM84 104h1v1h-1zM86 104h3v1h-3zM0 105h2v1h-2zM20 105h14v1h-14zM52 105h14v1h-14zM84 105h6v1h-6zM0 106h2v1h-2zM20 106h3v1h-3zM24 106h3v1h-3zM28 106h3v1h-3zM32 106h2v1h-2zM52 106h3v1h-3zM56 106h3v1h-3zM60 106h3v1h-3zM64 106h2v1h-2zM84 106h3v1h-3zM88 106h2v1h-2zM0 107h1v1h-1zM19 107h14v1h-14zM51 107h14v1h-14zM83 107h7v1h-7zM0 108h1v1h-1zM20 108h1v1h-1zM22 108h3v1h-3zM26 108h3v1h-3zM30 108h3v1h-3zM52 108h1v1h-1zM54 108h3v1h-3zM58 108h3v1h-3zM62 108h3v1h-3zM84 108h1v1h-1zM86 108h3v1h-3zM22 109h10v1h-10zM54 109h10v1h-10zM86 109h4v1h-4zM19 110h1v1h-1zM24 110h3v1h-3zM28 110h3v1h-3zM51 110h1v1h-1zM56 110h3v1h-3zM60 110h3v1h-3zM83 110h1v1h-1zM88 110h2v1h-2zM26 111h5v1h-5zM58 111h5v1h-5zM17 112h1v1h-1zM21 112h1v1h-1zM28 112h1v1h-1zM30 112h1v1h-1zM49 112h1v1h-1zM53 112h1v1h-1zM60 112h1v1h-1zM62 112h1v1h-1zM81 112h1v1h-1zM85 112h1v1h-1zM15 114h1v1h-1zM19 114h1v1h-1zM23 114h1v1h-1zM27 114h1v1h-1zM47 114h1v1h-1zM51 114h1v1h-1zM55 114h1v1h-1zM59 114h1v1h-1zM79 114h1v1h-1zM83 114h1v1h-1zM87 114h1v1h-1zM17 116h1v1h-1zM21 116h1v1h-1zM25 116h1v1h-1zM49 116h1v1h-1zM53 116h1v1h-1zM57 116h1v1h-1zM81 116h1v1h-1zM85 116h1v1h-1zM89 116h1v1h-1zM15 118h1v1h-1zM19 118h1v1h-1zM23 118h1v1h-1zM27 118h1v1h-1zM47 118h1v1h-1zM51 118h1v1h-1zM55 118h1v1h-1zM59 118h1v1h-1zM79 118h1v1h-1zM83 118h1v1h-1zM87 118h1v1h-1zM13 120h1v1h-1zM17 120h1v1h-1zM21 120h1v1h-1zM25 120h1v1h-1zM45 120h1v1h-1zM49 120h1v1h-1zM53 120h1v1h-1zM57 120h1v1h-1zM77 120h1v1h-1zM81 120h1v1h-1zM85 120h1v1h-1zM89 120h1v1h-1zM12 122h1v1h-1zM19 122h1v1h-1zM23 122h1v1h-1zM44 122h1v1h-1zM51 122h1v1h-1zM55 122h1v1h-1zM76 122h1v1h-1zM83 122h1v1h-1zM87 122h1v1h-1zM11 123h4v1h-4zM43 123h4v1h-4zM75 123h4v1h-4zM10 124h3v1h-3zM14 124h3v1h-3zM21 124h1v1h-1zM42 124h3v1h-3zM46 124h3v1h-3zM53 124h1v1h-1zM74 124h3v1h-3zM78 124h3v1h-3zM85 124h1v1h-1zM10 125h9v1h-9zM42 125h9v1h-9zM74 125h9v1h-9zM9 126h2v1h-2zM12 126h3v1h-3zM16 126h3v1h-3zM20 126h1v1h-1zM41 126h2v1h-2zM44 126h3v1h-3zM48 126h3v1h-3zM52 126h1v1h-1zM73 126h2v1h-2zM76 126h3v1h-3zM80 126h3v1h-3zM84 126h1v1h-1zM9 127h14v1h-14zM41 127h14v1h-14zM73 127h14v1h-14zM8 128h1v1h-1zM10 128h3v1h-3zM14 128h3v1h-3zM18 128h3v1h-3zM22 128h1v1h-1zM40 128h1v1h-1zM42 128h3v1h-3zM46 128h3v1h-3zM50 128h3v1h-3zM54 128h1v1h-1zM72 128h1v1h-1zM74 128h3v1h-3zM78 128h3v1h-3zM82 128h3v1h-3zM86 128h1v1h-1zM8 129h14v1h-14zM40 129h14v1h-14zM72 129h14v1h-14zM8 130h3v1h-3zM12 130h3v1h-3zM16 130h3v1h-3zM20 130h2v1h-2zM40 130h3v1h-3zM44 130h3v1h-3zM48 130h3v1h-3zM52 130h2v1h-2zM72 130h3v1h-3zM76 130h3v1h-3zM80 130h3v1h-3zM84 130h2v1h-2zM7 131h14v1h-14zM39 131h14v1h-14zM71 131h14v1h-14zM6 132h3v1h-3zM10 132h3v1h-3zM14 132h3v1h-3zM18 132h3v1h-3zM38 132h3v1h-3zM42 132h3v1h-3zM46 132h3v1h-3zM50 132h3v1h-3zM70 132h3v1h-3zM74 132h3v1h-3zM78 132h3v1h-3zM82 132h3v1h-3zM6 133h14v1h-14zM38 133h14v1h-14zM70 133h14v1h-14zM8 134h3v1h-3zM12 134h3v1h-3zM16 134h3v1h-3zM40 134h3v1h-3zM44 134h3v1h-3zM48 134h3v1h-3zM72 134h3v1h-3zM76 134h3v1h-3zM80 134h3v1h-3zM10 135h9v1h-9zM42 135h9v1h-9zM74 135h9v1h-9zM5 136h1v1h-1zM12 136h1v1h-1zM14 136h3v1h-3zM18 136h1v1h-1zM37 136h1v1h-1zM44 136h1v1h-1zM46 136h3v1h-3zM50 136h1v1h-1zM69 136h1v1h-1zM76 136h1v1h-1zM78 136h3v1h-3zM82 136h1v1h-1zM14 137h4v1h-4zM46 137h4v1h-4zM78 137h4v1h-4zM3 138h1v1h-1zM7 138h1v1h-1zM11 138h1v1h-1zM16 138h2v1h-2zM35 138h1v1h-1zM39 138h1v1h-1zM43 138h1v1h-1zM48 138h2v1h-2zM67 138h1v1h-1zM71 138h1v1h-1zM75 138h1v1h-1zM80 138h2v1h-2zM5 140h1v1h-1zM9 140h1v1h-1zM13 140h1v1h-1zM37 140h1v1h-1zM41 140h1v1h-1zM45 140h1v1h-1zM69 140h1v1h-1zM73 140h1v1h-1zM77 140h1v1h-1zM3 142h1v1h-1zM7 142h1v1h-1zM11 142h1v1h-1zM15 142h1v1h-1zM35 142h1v1h-1zM39 142h1v1h-1zM43 142h1v1h-1zM47 142h1v1h-1zM67 142h1v1h-1zM71 142h1v1h-1zM75 142h1v1h-1zM79 142h1v1h-1zM1 144h1v1h-1zM5 144h1v1h-1zM9 144h1v1h-1zM13 144h1v1h-1zM33 144h1v1h-1zM37 144h1v1h-1zM41 144h1v1h-1zM45 144h1v1h-1zM65 144h1v1h-1zM69 144h1v1h-1zM73 144h1v1h-1zM77 144h1v1h-1zM3 146h1v1h-1zM7 146h1v1h-1zM11 146h1v1h-1zM35 146h1v1h-1zM39 146h1v1h-1zM43 146h1v1h-1zM67 146h1v1h-1zM71 146h1v1h-1zM75 146h1v1h-1zM0 148h1v1h-1zM5 148h1v1h-1zM9 148h1v1h-1zM30 148h3v1h-3zM37 148h1v1h-1zM41 148h1v1h-1zM62 148h3v1h-3zM69 148h1v1h-1zM73 148h1v1h-1zM0 149h3v1h-3zM30 149h5v1h-5zM62 149h5v1h-5zM0 150h3v1h-3zM4 150h1v1h-1zM11 150h1v1h-1zM29 150h2v1h-2zM32 150h3v1h-3zM36 150h1v1h-1zM43 150h1v1h-1zM61 150h2v1h-2zM64 150h3v1h-3zM68 150h1v1h-1zM75 150h1v1h-1zM0 151h7v1h-7zM29 151h10v1h-10zM61 151h10v1h-10zM0 152h1v1h-1zM2 152h3v1h-3zM6 152h3v1h-3zM28 152h1v1h-1zM30 152h3v1h-3zM34 152h3v1h-3zM38 152h3v1h-3zM60 152h1v1h-1zM62 152h3v1h-3zM66 152h3v1h-3zM70 152h3v1h-3zM0 153h10v1h-10zM28 153h14v1h-14zM60 153h14v1h-14zM0 154h3v1h-3zM4 154h3v1h-3zM8 154h2v1h-2zM28 154h3v1h-3zM32 154h3v1h-3zM36 154h3v1h-3zM40 154h2v1h-2zM60 154h3v1h-3zM64 154h3v1h-3zM68 154h3v1h-3zM72 154h2v1h-2zM0 155h9v1h-9zM27 155h14v1h-14zM59 155h14v1h-14zM0 156h1v1h-1zM2 156h3v1h-3zM6 156h3v1h-3zM26 156h3v1h-3zM30 156h3v1h-3zM34 156h3v1h-3zM38 156h3v1h-3zM58 156h3v1h-3zM62 156h3v1h-3zM66 156h3v1h-3zM70 156h3v1h-3zM0 157h8v1h-8zM26 157h14v1h-14zM58 157h14v1h-14zM0 158h3v1h-3zM4 158h3v1h-3zM25 158h2v1h-2zM28 158h3v1h-3zM32 158h3v1h-3zM36 158h3v1h-3zM57 158h2v1h-2zM60 158h3v1h-3zM64 158h3v1h-3zM68 158h3v1h-3zM89 158h1v1h-1zM0 159h7v1h-7zM26 159h13v1h-13zM58 159h13v1h-13z"/><path fill="#7a30a0" d="M24 0h1v1h-1zM56 0h1v1h-1zM88 0h1v1h-1zM24 1h3v1h-3zM56 1h3v1h-3zM88 1h2v1h-2zM24 2h3v1h-3zM28 2h1v1h-1zM56 2h3v1h-3zM60 2h1v1h-1zM88 2h2v1h-2zM23 3h8v1h-8zM55 3h8v1h-8zM87 3h3v1h-3zM0 4h1v1h-1zM22 4h3v1h-3zM26 4h3v1h-3zM30 4h3v1h-3zM54 4h3v1h-3zM58 4h3v1h-3zM62 4h3v1h-3zM86 4h3v1h-3zM0 5h3v1h-3zM22 5h13v1h-13zM54 5h13v1h-13zM86 5h4v1h-4zM0 6h3v1h-3zM21 6h2v1h-2zM24 6h3v1h-3zM28 6h3v1h-3zM32 6h3v1h-3zM53 6h2v1h-2zM56 6h3v1h-3zM60 6h3v1h-3zM64 6h3v1h-3zM85 6h2v1h-2zM88 6h2v1h-2zM0 7h3v1h-3zM21 7h14v1h-14zM53 7h14v1h-14zM85 7h5v1h-5zM0 8h1v1h-1zM2 8h1v1h-1zM20 8h1v1h-1zM22 8h3v1h-3zM26 8h3v1h-3zM30 8h3v1h-3zM34 8h1v1h-1zM52 8h1v1h-1zM54 8h3v1h-3zM58 8h3v1h-3zM62 8h3v1h-3zM66 8h1v1h-1zM84 8h1v1h-1zM86 8h3v1h-3zM0 9h2v1h-2zM20 9h14v1h-14zM52 9h14v1h-14zM84 9h6v1h-6zM0 10h2v1h-2zM20 10h3v1h-3zM24 10h3v1h-3zM28 10h3v1h-3zM32 10h2v1h-2zM52 10h3v1h-3zM56 10h3v1h-3zM60 10h3v1h-3zM64 10h2v1h-2zM84 10h3v1h-3zM88 10h2v1h-2zM0 11h1v1h-1zM19 11h14v1h-14zM51 11h14v1h-14zM83 11h7v1h-7zM0 12h1v1h-1zM20 12h1v1h-1zM22 12h3v1h-3zM26 12h3v1h-3zM30 12h3v1h-3zM52 12h1v1h-1zM54 12h3v1h-3zM58 12h3v1h-3zM62 12h3v1h-3zM84 12h1v1h-1zM86 12h3v1h-3zM22 13h10v1h-10zM54 13h10v1h-10zM86 13h4v1h-4zM24 14h3v1h-3zM28 14h3v1h-3zM56 14h3v1h-3zM60 14h3v1h-3zM88 14h2v1h-2zM26 15h5v1h-5zM58 15h5v1h-5zM28 16h1v1h-1zM30 16h1v1h-1zM60 16h1v1h-1zM62 16h1v1h-1zM12 26h1v1h-1zM44 26h1v1h-1zM76 26h1v1h-1zM11 27h4v1h-4zM43 27h4v1h-4zM75 27h4v1h-4zM10 28h3v1h-3zM14 28h3v1h-3zM42 28h3v1h-3zM46 28h3v1h-3zM74 28h3v1h-3zM78 28h3v1h-3zM10 29h9v1h-9zM42 29h9v1h-9zM74 29h9v1h-9zM9 30h2v1h-2zM12 30h3v1h-3zM16 30h3v1h-3zM20 30h1v1h-1zM41 30h2v1h-2zM44 30h3v1h-3zM48 30h3v1h-3zM52 30h1v1h-1zM73 30h2v1h-2zM76 30h3v1h-3zM80 30h3v1h-3zM84 30h1v1h-1zM9 31h14v1h-14zM41 31h14v1h-14zM73 31h14v1h-14zM8 32h1v1h-1zM10 32h3v1h-3zM14 32h3v1h-3zM18 32h3v1h-3zM22 32h1v1h-1zM40 32h1v1h-1zM42 32h3v1h-3zM46 32h3v1h-3zM50 32h3v1h-3zM54 32h1v1h-1zM72 32h1v1h-1zM74 32h3v1h-3zM78 32h3v1h-3zM82 32h3v1h-3zM86 32h1v1h-1zM8 33h14v1h-14zM40 33h14v1h-14zM72 33h14v1h-14zM8 34h3v1h-3zM12 34h3v1h-3zM16 34h3v1h-3zM20 34h2v1h-2zM40 34h3v1h-3zM44 34h3v1h-3zM48 34h3v1h-3zM52 34h2v1h-2zM72 34h3v1h-3zM76 34h3v1h-3zM80 34h3v1h-3zM84 34h2v1h-2zM7 35h14v1h-14zM39 35h14v1h-14zM71 35h14v1h-14zM6 36h3v1h-3zM10 36h3v1h-3zM14 36h3v1h-3zM18 36h3v1h-3zM38 36h3v1h-3zM42 36h3v1h-3zM46 36h3v1h-3zM50 36h3v1h-3zM70 36h3v1h-3zM74 36h3v1h-3zM78 36h3v1h-3zM82 36h3v1h-3zM6 37h14v1h-14zM38 37h14v1h-14zM70 37h14v1h-14zM8 38h3v1h-3zM12 38h3v1h-3zM16 38h3v1h-3zM40 38h3v1h-3zM44 38h3v1h-3zM48 38h3v1h-3zM72 38h3v1h-3zM76 38h3v1h-3zM80 38h3v1h-3zM10 39h9v1h-9zM42 39h9v1h-9zM74 39h9v1h-9zM12 40h1v1h-1zM14 40h3v1h-3zM18 40h1v1h-1zM44 40h1v1h-1zM46 40h3v1h-3zM50 40h1v1h-1zM76 40h1v1h-1zM78 40h3v1h-3zM82 40h1v1h-1zM14 41h4v1h-4zM46 41h4v1h-4zM78 41h4v1h-4zM16 42h2v1h-2zM48 42h2v1h-2zM80 42h2v1h-2zM0 52h1v1h-1zM30 52h3v1h-3zM62 52h3v1h-3zM0 53h3v1h-3zM30 53h5v1h-5zM62 53h5v1h-5zM0 54h3v1h-3zM4 54h1v1h-1zM29 54h2v1h-2zM32 54h3v1h-3zM36 54h1v1h-1zM61 54h2v1h-2zM64 54h3v1h-3zM68 54h1v1h-1zM0 55h7v1h-7zM29 55h10v1h-10zM61 55h10v1h-10zM0 56h1v1h-1zM2 56h3v1h-3zM6 56h3v1h-3zM28 56h1v1h-1zM30 56h3v1h-3zM34 56h3v1h-3zM38 56h3v1h-3zM60 56h1v1h-1zM62 56h3v1h-3zM66 56h3v1h-3zM70 56h3v1h-3zM0 57h10v1h-10zM28 57h14v1h-14zM60 57h14v1h-14zM0 58h3v1h-3zM4 58h3v1h-3zM8 58h2v1h-2zM28 58h3v1h-3zM32 58h3v1h-3zM36 58h3v1h-3zM40 58h2v1h-2zM60 58h3v1h-3zM64 58h3v1h-3zM68 58h3v1h-3zM72 58h2v1h-2zM0 59h9v1h-9zM27 59h14v1h-14zM59 59h14v1h-14zM0 60h1v1h-1zM2 60h3v1h-3zM6 60h3v1h-3zM26 60h3v1h-3zM30 60h3v1h-3zM34 60h3v1h-3zM38 60h3v1h-3zM58 60h3v1h-3zM62 60h3v1h-3zM66 60h3v1h-3zM70 60h3v1h-3zM0 61h8v1h-8zM26 61h14v1h-14zM58 61h14v1h-14zM0 62h3v1h-3zM4 62h3v1h-3zM25 62h2v1h-2zM28 62h3v1h-3zM32 62h3v1h-3zM36 62h3v1h-3zM57 62h2v1h-2zM60 62h3v1h-3zM64 62h3v1h-3zM68 62h3v1h-3zM89 62h1v1h-1zM0 63h7v1h-7zM26 63h13v1h-13zM58 63h13v1h-13zM0 64h1v1h-1zM2 64h3v1h-3zM6 64h1v1h-1zM28 64h1v1h-1zM30 64h3v1h-3zM34 64h3v1h-3zM38 64h1v1h-1zM60 64h1v1h-1zM62 64h3v1h-3zM66 64h3v1h-3zM70 64h1v1h-1zM0 65h6v1h-6zM30 65h8v1h-8zM62 65h8v1h-8zM0 66h3v1h-3zM4 66h2v1h-2zM32 66h3v1h-3zM36 66h2v1h-2zM64 66h3v1h-3zM68 66h2v1h-2zM2 67h3v1h-3zM34 67h3v1h-3zM66 67h3v1h-3zM4 68h1v1h-1zM36 68h1v1h-1zM68 68h1v1h-1zM18 77h1v1h-1zM50 77h1v1h-1zM82 77h1v1h-1zM17 78h2v1h-2zM20 78h1v1h-1zM49 78h2v1h-2zM52 78h1v1h-1zM81 78h2v1h-2zM84 78h1v1h-1zM17 79h6v1h-6zM49 79h6v1h-6zM81 79h6v1h-6zM16 80h1v1h-1zM18 80h3v1h-3zM22 80h3v1h-3zM48 80h1v1h-1zM50 80h3v1h-3zM54 80h3v1h-3zM80 80h1v1h-1zM82 80h3v1h-3zM86 80h3v1h-3zM16 81h11v1h-11zM48 81h11v1h-11zM80 81h10v1h-10zM16 82h3v1h-3zM20 82h3v1h-3zM24 82h3v1h-3zM28 82h1v1h-1zM48 82h3v1h-3zM52 82h3v1h-3zM56 82h3v1h-3zM60 82h1v1h-1zM80 82h3v1h-3zM84 82h3v1h-3zM88 82h2v1h-2zM15 83h14v1h-14zM47 83h14v1h-14zM79 83h11v1h-11zM14 84h3v1h-3zM18 84h3v1h-3zM22 84h3v1h-3zM26 84h3v1h-3zM46 84h3v1h-3zM50 84h3v1h-3zM54 84h3v1h-3zM58 84h3v1h-3zM78 84h3v1h-3zM82 84h3v1h-3zM86 84h3v1h-3zM14 85h14v1h-14zM46 85h14v1h-14zM78 85h12v1h-12zM13 86h2v1h-2zM16 86h3v1h-3zM20 86h3v1h-3zM24 86h3v1h-3zM45 86h2v1h-2zM48 86h3v1h-3zM52 86h3v1h-3zM56 86h3v1h-3zM77 86h2v1h-2zM80 86h3v1h-3zM84 86h3v1h-3zM88 86h2v1h-2zM13 87h14v1h-14zM45 87h14v1h-14zM77 87h13v1h-13zM12 88h1v1h-1zM14 88h3v1h-3zM18 88h3v1h-3zM22 88h3v1h-3zM26 88h1v1h-1zM44 88h1v1h-1zM46 88h3v1h-3zM50 88h3v1h-3zM54 88h3v1h-3zM58 88h1v1h-1zM76 88h1v1h-1zM78 88h3v1h-3zM82 88h3v1h-3zM86 88h3v1h-3zM14 89h12v1h-12zM46 89h12v1h-12zM78 89h12v1h-12zM16 90h3v1h-3zM20 90h3v1h-3zM24 90h2v1h-2zM48 90h3v1h-3zM52 90h3v1h-3zM56 90h2v1h-2zM80 90h3v1h-3zM84 90h3v1h-3zM88 90h2v1h-2zM18 91h7v1h-7zM50 91h7v1h-7zM82 91h7v1h-7zM20 92h1v1h-1zM22 92h3v1h-3zM52 92h1v1h-1zM54 92h3v1h-3zM84 92h1v1h-1zM86 92h3v1h-3zM22 93h2v1h-2zM54 93h2v1h-2zM86 93h2v1h-2zM5 103h2v1h-2zM37 103h2v1h-2zM69 103h2v1h-2zM4 104h1v1h-1zM6 104h3v1h-3zM36 104h1v1h-1zM38 104h3v1h-3zM68 104h1v1h-1zM70 104h3v1h-3zM4 105h7v1h-7zM36 105h7v1h-7zM68 105h7v1h-7zM4 106h3v1h-3zM8 106h3v1h-3zM12 106h1v1h-1zM36 106h3v1h-3zM40 106h3v1h-3zM44 106h1v1h-1zM68 106h3v1h-3zM72 106h3v1h-3zM76 106h1v1h-1zM3 107h12v1h-12zM35 107h12v1h-12zM67 107h12v1h-12zM2 108h3v1h-3zM6 108h3v1h-3zM10 108h3v1h-3zM14 108h3v1h-3zM34 108h3v1h-3zM38 108h3v1h-3zM42 108h3v1h-3zM46 108h3v1h-3zM66 108h3v1h-3zM70 108h3v1h-3zM74 108h3v1h-3zM78 108h3v1h-3zM2 109h14v1h-14zM34 109h14v1h-14zM66 109h14v1h-14zM1 110h2v1h-2zM4 110h3v1h-3zM8 110h3v1h-3zM12 110h3v1h-3zM33 110h2v1h-2zM36 110h3v1h-3zM40 110h3v1h-3zM44 110h3v1h-3zM65 110h2v1h-2zM68 110h3v1h-3zM72 110h3v1h-3zM76 110h3v1h-3zM1 111h14v1h-14zM33 111h14v1h-14zM65 111h14v1h-14zM0 112h1v1h-1zM2 112h3v1h-3zM6 112h3v1h-3zM10 112h3v1h-3zM14 112h1v1h-1zM32 112h1v1h-1zM34 112h3v1h-3zM38 112h3v1h-3zM42 112h3v1h-3zM46 112h1v1h-1zM64 112h1v1h-1zM66 112h3v1h-3zM70 112h3v1h-3zM74 112h3v1h-3zM78 112h1v1h-1zM0 113h14v1h-14zM32 113h14v1h-14zM64 113h14v1h-14zM0 114h3v1h-3zM4 114h3v1h-3zM8 114h3v1h-3zM12 114h2v1h-2zM32 114h3v1h-3zM36 114h3v1h-3zM40 114h3v1h-3zM44 114h2v1h-2zM64 114h3v1h-3zM68 114h3v1h-3zM72 114h3v1h-3zM76 114h2v1h-2zM2 115h11v1h-11zM34 115h11v1h-11zM66 115h11v1h-11zM4 116h1v1h-1zM6 116h3v1h-3zM10 116h3v1h-3zM36 116h1v1h-1zM38 116h3v1h-3zM42 116h3v1h-3zM68 116h1v1h-1zM70 116h3v1h-3zM74 116h3v1h-3zM6 117h6v1h-6zM38 117h6v1h-6zM70 117h6v1h-6zM8 118h3v1h-3zM40 118h3v1h-3zM72 118h3v1h-3zM10 119h1v1h-1zM42 119h1v1h-1zM74 119h1v1h-1zM24 128h1v1h-1zM56 128h1v1h-1zM88 128h1v1h-1zM24 129h3v1h-3zM56 129h3v1h-3zM88 129h2v1h-2zM24 130h3v1h-3zM28 130h1v1h-1zM56 130h3v1h-3zM60 130h1v1h-1zM88 130h2v1h-2zM23 131h8v1h-8zM55 131h8v1h-8zM87 131h3v1h-3zM0 132h1v1h-1zM22 132h3v1h-3zM26 132h3v1h-3zM30 132h3v1h-3zM54 132h3v1h-3zM58 132h3v1h-3zM62 132h3v1h-3zM86 132h3v1h-3zM0 133h3v1h-3zM22 133h13v1h-13zM54 133h13v1h-13zM86 133h4v1h-4zM0 134h3v1h-3zM21 134h2v1h-2zM24 134h3v1h-3zM28 134h3v1h-3zM32 134h3v1h-3zM53 134h2v1h-2zM56 134h3v1h-3zM60 134h3v1h-3zM64 134h3v1h-3zM85 134h2v1h-2zM88 134h2v1h-2zM0 135h3v1h-3zM21 135h14v1h-14zM53 135h14v1h-14zM85 135h5v1h-5zM0 136h1v1h-1zM2 136h1v1h-1zM20 136h1v1h-1zM22 136h3v1h-3zM26 136h3v1h-3zM30 136h3v1h-3zM34 136h1v1h-1zM52 136h1v1h-1zM54 136h3v1h-3zM58 136h3v1h-3zM62 136h3v1h-3zM66 136h1v1h-1zM84 136h1v1h-1zM86 136h3v1h-3zM0 137h2v1h-2zM20 137h14v1h-14zM52 137h14v1h-14zM84 137h6v1h-6zM0 138h2v1h-2zM20 138h3v1h-3zM24 138h3v1h-3zM28 138h3v1h-3zM32 138h2v1h-2zM52 138h3v1h-3zM56 138h3v1h-3zM60 138h3v1h-3zM64 138h2v1h-2zM84 138h3v1h-3zM88 138h2v1h-2zM0 139h1v1h-1zM19 139h14v1h-14zM51 139h14v1h-14zM83 139h7v1h-7zM0 140h1v1h-1zM20 140h1v1h-1zM22 140h3v1h-3zM26 140h3v1h-3zM30 140h3v1h-3zM52 140h1v1h-1zM54 140h3v1h-3zM58 140h3v1h-3zM62 140h3v1h-3zM84 140h1v1h-1zM86 140h3v1h-3zM22 141h10v1h-10zM54 141h10v1h-10zM86 141h4v1h-4zM24 142h3v1h-3zM28 142h3v1h-3zM56 142h3v1h-3zM60 142h3v1h-3zM88 142h2v1h-2zM26 143h5v1h-5zM58 143h5v1h-5zM28 144h1v1h-1zM30 144h1v1h-1zM60 144h1v1h-1zM62 144h1v1h-1zM12 154h1v1h-1zM44 154h1v1h-1zM76 154h1v1h-1zM11 155h4v1h-4zM43 155h4v1h-4zM75 155h4v1h-4zM10 156h3v1h-3zM14 156h3v1h-3zM42 156h3v1h-3zM46 156h3v1h-3zM74 156h3v1h-3zM78 156h3v1h-3zM10 157h9v1h-9zM42 157h9v1h-9zM74 157h9v1h-9zM9 158h2v1h-2zM12 158h3v1h-3zM16 158h3v1h-3zM20 158h1v1h-1zM41 158h2v1h-2zM44 158h3v1h-3zM48 158h3v1h-3zM52 158h1v1h-1zM73 158h2v1h-2zM76 158h3v1h-3zM80 158h3v1h-3zM84 158h1v1h-1zM9 159h14v1h-14zM41 159h14v1h-14zM73 159h14v1h-14z"/></svg>
<div class="a t " style="left:952px;top:635.0px;font-size:13px;letter-spacing:0px;transform:scaleX(0.8630);">Canvas Size</div>
<div class="a dotb" style="left:1021px;top:632.2px;width:195.7px;height:19.5px;background-color:#c4c6cc"></div>
<div class="a t " style="left:1024.5px;top:635.0px;font-size:13px;letter-spacing:0px;transform:scaleX(1.0617);">Portrait (tiny)</div>
<svg class="a" style="left:1203px;top:637px;" width="9" height="7"><path d="M1 1 L4.5 5 L8 1" fill="none" stroke="#222" stroke-width="1.6"/></svg>
<div class="a t " style="left:1222px;top:635.0px;font-size:13px;letter-spacing:0px;transform:scaleX(0.8630);">90 &times; 160</div>
<div class="a dotb" style="left:952px;top:657.2px;width:106.7px;height:25.3px;background-color:#c4c6cc"></div>
<div class="a t " style="left:954px;top:663.0px;font-size:13px;letter-spacing:0px;transform:scaleX(0.9177);">Is Animation</div>
<div class="a " style="left:1025px;top:662px;width:31px;height:16.5px;background:#5a554f;border:1.5px solid #222;border-radius:3px"></div>
<div class="a " style="left:1026.5px;top:663.5px;width:14px;height:13.5px;background:#d4d4d4;border-radius:2px"></div>
<div class="a t " style="left:1095px;top:662.0px;font-size:13px;letter-spacing:0px;transform:scaleX(0.8924);">0 Frames</div>
<div class="a t " style="left:1221px;top:662.0px;font-size:13px;letter-spacing:0px;transform:scaleX(0.7585);">0 FPS</div>
<div class="a " style="left:1067px;top:680px;width:78px;height:2px;background:#c9c4c0"></div>
<div class="a " style="left:1168px;top:680px;width:81px;height:2px;background:#c9c4c0"></div>
<svg class="a" style="left:1150px;top:659px;" width="114" height="21"><g fill="none" stroke-width="1.6"><path d="M1.5 6 L5 2.5 L8.5 6" stroke="#222"/><path d="M1.5 13 L5 16.5 L8.5 13" stroke="#a09a96"/><path d="M104.5 6 L108 2.5 L111.5 6" stroke="#222"/><path d="M104.5 14.5 L108 18 L111.5 14.5" stroke="#a09a96"/></g></svg>
<div class="a dotb" style="left:952px;top:688px;width:314.7px;height:19.5px;background-color:#c4c6cc"></div>
<div class="a t " style="left:1060px;top:691.5px;font-size:13px;letter-spacing:0px;transform:scaleX(0.7943);">EXPORT AS PNG...</div>
<div class="a t " style="left:1063px;top:686.0px;font-size:15px;letter-spacing:0px;font-weight:bold;transform:scaleX(0.7943);color:#cfcfcf;-webkit-text-stroke:0;text-shadow:1px 0 #3a3a3a,-1px 0 #3a3a3a,0 1px #3a3a3a,0 -1px #3a3a3a,1px 1px #3a3a3a,-1px -1px #3a3a3a,1px -1px #3a3a3a,-1px 1px #3a3a3a">Playtest Version 03B (January 2025)</div>
<div class="a " style="left:1272px;top:705px;width:7px;height:14px;background:#c9cbd0"></div>
<div class="a " style="left:1266px;top:712px;width:13px;height:7px;background:#c9cbd0"></div>
<div class="a " style="left:231.9px;top:66.3px;width:246px;height:143.5px;background:#fcd934;border-bottom-right-radius:6px;box-shadow:0 1.5px 0 #8a6a20"></div>
<div class="a " style="left:248px;top:68px;width:212px;height:12px;background-image:conic-gradient(#e9b52e 25%,transparent 0 50%,#e9b52e 0 75%,transparent 0);background-size:5.333px 5.333px;opacity:.75"></div>
<div class="a " style="left:236px;top:72px;width:9px;height:4px;background:#b25a2a"></div>
<svg class="a" style="left:463px;top:67px;" width="12" height="12"><path d="M2 2 L10 10 M10 2 L2 10" stroke="#b25a2a" stroke-width="2.4"/></svg>
<div class="a t " style="left:238px;top:87.0px;font-size:13px;letter-spacing:0px;transform:scaleX(0.8553);">TODO:</div>
<div class="a t " style="left:237px;top:107.0px;font-size:13px;letter-spacing:0px;transform:scaleX(0.9353);">Make a new profile pic</div>
<div class="a " style="left:359px;top:107px;width:1.3px;height:14px;background:#222"></div>
<div class="a " style="left:0px;top:0px;width:1280px;height:32px;background:#2d2d2d"></div>
<svg class="a" style="left:0;top:0" width="1280" height="32" viewBox="0 0 1280 32">
<g fill="none" stroke="#c9c9c9" stroke-width="1.4">
<rect x="11.3" y="4.7" width="23" height="22.6" rx="1.5"/>
<rect x="14" y="7.5" width="17.5" height="12.5"/>
<line x1="16.5" y1="14" x2="20" y2="10.5"/>
<line x1="12" y1="22" x2="34" y2="22"/>
<line x1="27" y1="24.5" x2="32" y2="24.5" stroke-width="1.6"/>
<path d="M75.00 12.33 L78.70 12.79 L78.70 18.01 L75.00 18.47 L73.86 20.45 L75.31 23.88 L70.79 26.49 L68.54 23.52 L66.26 23.52 L64.01 26.49 L59.49 23.88 L60.94 20.45 L59.80 18.47 L56.10 18.01 L56.10 12.79 L59.80 12.33 L60.94 10.35 L59.49 6.92 L64.01 4.31 L66.26 7.28 L68.54 7.28 L70.79 4.31 L75.31 6.92 L73.86 10.35z" stroke-linejoin="round"/>
<circle cx="67.4" cy="15.4" r="3.8"/>
<path d="M100.7 4.7h21.4v18.6l-4.4 4.3h-17z"/>
<path d="M117.7 27.6v-4.3h4.4"/>
<path d="M109.3 11.5h2.6v2.7h2.7v2.6h-2.7v2.7h-2.6v-2.7h-2.7v-2.6h2.7z"/>
</g>
<circle cx="67.4" cy="15.4" r="0.9" fill="#c9c9c9"/>
</svg>
<svg class="a" style="left:520px;top:0" width="240" height="32" viewBox="520 0 240 32">
<!-- mailbox -->
<rect x="541" y="24" width="9" height="8" fill="#d8603a" stroke="#1a1010" stroke-width="1"/>
<rect x="543" y="28" width="5" height="4" fill="#f4a050"/>
<path d="M535 4 Q535 1.5 538 2 L554 7.5 Q557.5 8.5 557.5 12 V23 Q557.5 26.5 554 26.5 L549 26.5 L536.5 15 Q534.5 14 534.5 12z" fill="#44aef0" stroke="#101828" stroke-width="1.5"/>
<path d="M549 9 Q557 8 557 12 V23 Q557 26 553 26 H549z" fill="#5cc0f8" stroke="#101828" stroke-width="1.3"/>
<path d="M551.5 21 V13 H554 Q556 13 556 15.5 Q556 18 554 18 H551.5" fill="none" stroke="#101828" stroke-width="1.3"/>
<path d="M536 11 L549 17" stroke="#101828" stroke-width="1.5"/>
<path d="M539 18 L547 22" stroke="#101828" stroke-width="1.5"/>
<path d="M531 14 L538 15.5 L540 19 L537 24 L533 22z" fill="#ee1c58"/>
<!-- cube + check -->
<path d="M577 6 l8-4 l9 4 v9 l-9 4 l-8-4z" fill="#f1913a" stroke="#1a1a1a" stroke-width="1.2"/>
<path d="M577 6 l8-4 l9 4 l-9 4z" fill="#f4d030"/>
<path d="M585 10 l9-4 v9 l-9 4z" fill="#f4d840"/>
<path d="M585 10 v9" stroke="#1a1a1a" stroke-width="1.2"/>
<rect x="599.5" y="1.5" width="11" height="12" fill="#f4f4f4" stroke="#1a2a1a" stroke-width="1.3"/>
<path d="M601.5 7.5 l3 3 l4.5-6" fill="none" stroke="#3aa05a" stroke-width="2"/>
<g fill="#3a4e86"><rect x="576" y="16" width="33" height="2"/><rect x="577" y="21" width="2" height="2"/><rect x="583" y="21" width="26" height="2"/><rect x="577" y="25" width="2" height="2"/><rect x="583" y="25" width="26" height="2"/><rect x="577" y="29" width="2" height="2"/><rect x="583" y="29" width="26" height="2"/></g>
<!-- three cubes -->
<path d="M633 5 l7-3 l8 3 v9 l-8 3 l-7-3z" fill="#f1913a" stroke="#1a1a1a" stroke-width="1.2"/>
<path d="M633 5 l7-3 l8 3 l-8 3z" fill="#f4d030"/>
<path d="M640 8 l8-3 v9 l-8 3z" fill="#f4d840"/>
<path d="M625 19 l7-3 l8 3 v10 l-8 3 l-7-3z" fill="#e81f5a" stroke="#1a1a1a" stroke-width="1.2"/>
<path d="M641 19 l7-3 l8 3 v10 l-8 3 l-7-3z" fill="#3aa06a" stroke="#1a1a1a" stroke-width="1.2"/>
<path d="M641 19 l7 3 v10 l-7-3z" fill="#7a7068"/>
<!-- palette -->
<rect x="665" y="0" width="43" height="6" fill="#f01050"/>
<rect x="671.5" y="3.5" width="30" height="19" fill="#1a1a1a"/>
<rect x="673" y="4.5" width="8.5" height="8" fill="#2050e8"/>
<rect x="682.5" y="4.5" width="8.5" height="8" fill="#3aa8f0"/>
<rect x="692" y="4.5" width="8.5" height="8" fill="#3aa070"/>
<rect x="673" y="13.5" width="8.5" height="8" fill="#e8205a"/>
<rect x="682.5" y="13.5" width="8.5" height="8" fill="#f08a3a"/>
<path d="M694 17 l8 3 l-3 9 l-8-3z" fill="#f4e030" stroke="#1a1a1a" stroke-width="1.2"/>
<!-- chat -->
<path d="M726 2 h16 l3 3 v12 l-3 3 h-10 l-4 4 v-4 l-2-3 v-12z" fill="#f4f4f4"/>
<path d="M729 7 l6-3 l6 3 v7 l-6 3 l-6-3z" fill="#f1913a" stroke="#1a1a1a" stroke-width="1"/>
<path d="M729 7 l6-3 l6 3 l-6 3z" fill="#f4d030"/>
<path d="M735 10 l6-3 v7 l-6 3z" fill="#f4d840"/>
<g fill="#000"><circle cx="722" cy="19" r="3.6"/><path d="M715.5 32 v-3 a6.5 5 0 0 1 13 0 v3z"/><circle cx="745" cy="19" r="3.6"/><path d="M738.5 32 v-3 a6.5 5 0 0 1 13 0 v3z"/></g>
</svg>
<div class="a " style="left:954.5px;top:10px;width:8.5px;height:10px;background:#efefef"></div>
<svg class="a" style="left:976px;top:10px;" width="12" height="12"><path d="M1.5 1.5 L5.5 5.5 L1.5 9.5 M6 1.5 L10 5.5 L6 9.5" fill="none" stroke="#e6e6e6" stroke-width="2"/></svg>
<div class="a t " style="left:993px;top:8.8px;font-size:13.5px;letter-spacing:0px;transform:scaleX(0.8295);color:#e0e0e0">Cubist Bossa</div>
<div class="a t " style="left:1199px;top:3.0px;font-size:12.5px;letter-spacing:0px;transform:scaleX(0.8846);color:#f0f0f0">THU 2025.1.23</div>
<div class="a t " style="left:1225px;top:17.5px;font-size:12.5px;letter-spacing:0px;transform:scaleX(0.9159);color:#f0f0f0">08:48 PM</div></body></html>
